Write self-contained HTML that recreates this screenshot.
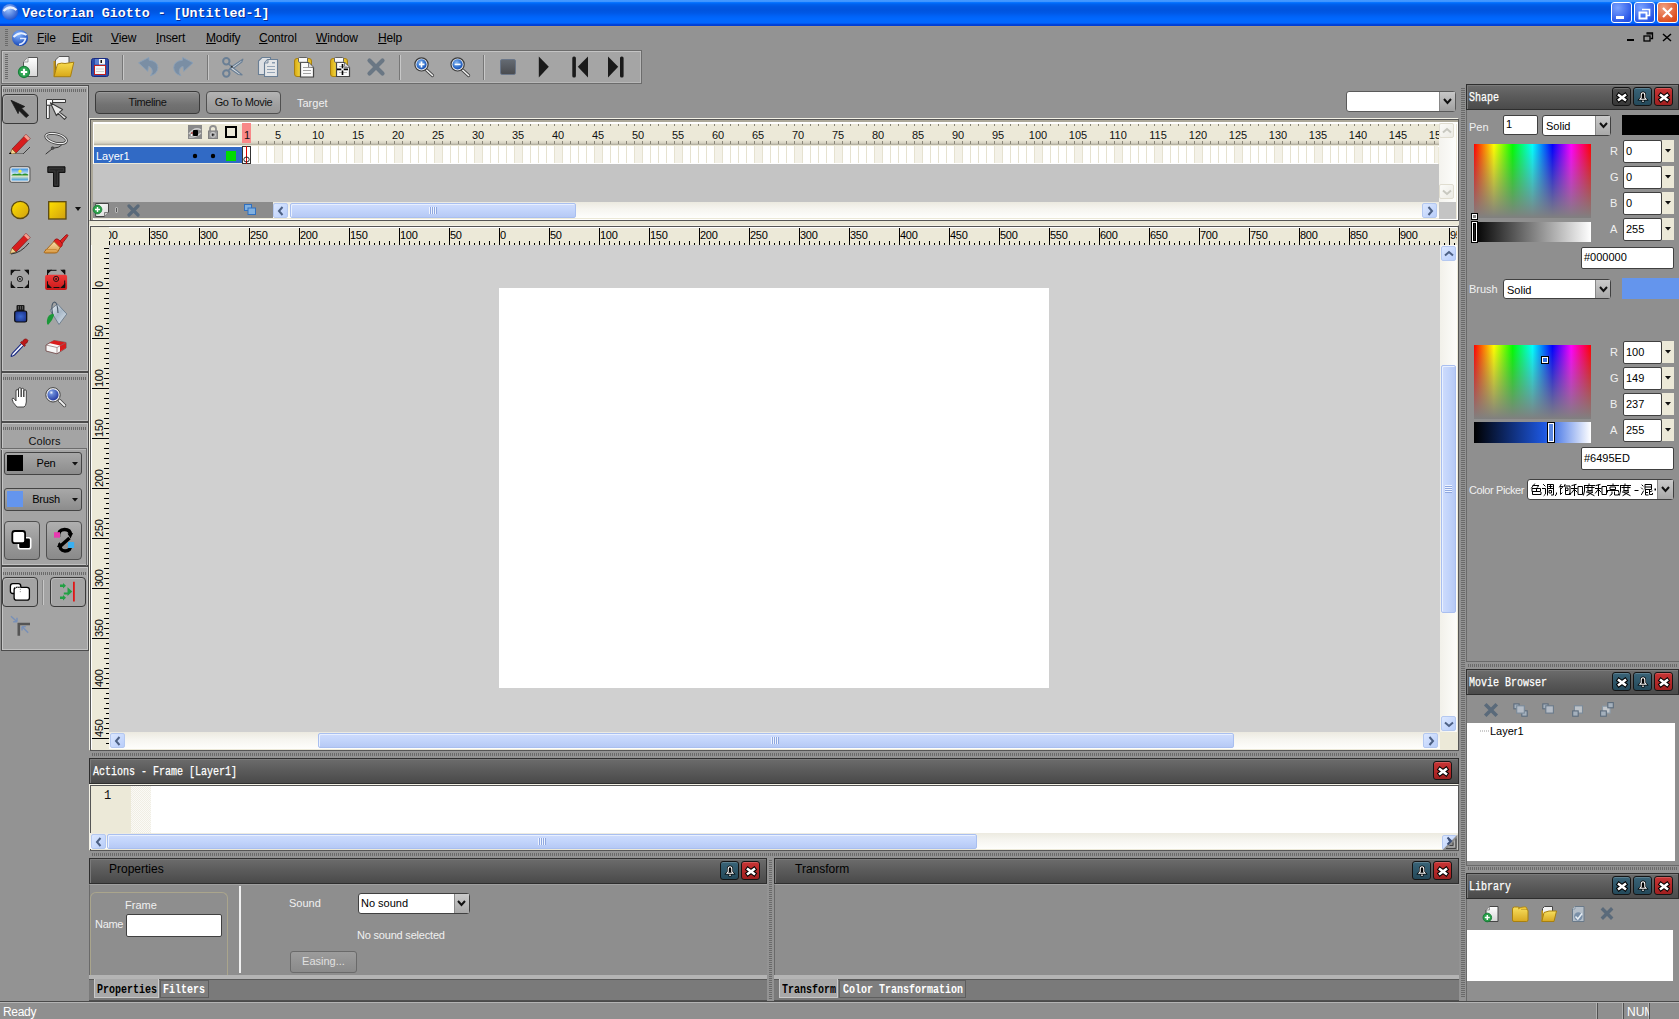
<!DOCTYPE html>
<html><head><meta charset="utf-8"><style>
*{margin:0;padding:0;box-sizing:border-box}
html,body{width:1679px;height:1019px;overflow:hidden;background:#939393;font-family:"Liberation Sans",sans-serif;font-size:11px;color:#000}
div,svg{position:absolute}
.grip{background:repeating-linear-gradient(90deg,#6a6a6a 0 1px,transparent 1px 2px)}
.gripv{background:repeating-linear-gradient(180deg,#6a6a6a 0 1px,transparent 1px 2px)}
.bm{font-family:"Liberation Mono",monospace;font-weight:bold;line-height:1}
</style></head>
<body>
<div style="position:absolute;left:0px;top:0px;width:1679px;height:26px;background:linear-gradient(#4499ff 0px,#3d93ff 1.8px,#0070ff 2.6px,#0060ec 4.5px,#0056e0 7px,#0054de 10px,#0058e6 13px,#0062f6 16px,#0068ff 19px,#0066ff 23px,#0042d8 24.5px,#003ccf 26px)"></div><div style="position:absolute;left:22px;top:7px;white-space:nowrap;line-height:1;font-family:'Liberation Mono',monospace;font-weight:bold;font-size:13.3px;color:#fff;text-shadow:1px 1px 0 #0a2a90">Vectorian Giotto - [Untitled-1]</div><svg style="position:absolute;left:0px;top:2px;" width="20" height="20" viewBox="0 0 20 20"><defs><radialGradient id="ai" cx="40%" cy="35%" r="70%"><stop offset="0" stop-color="#9cc4ff"/><stop offset="1" stop-color="#1d4fc8"/></radialGradient></defs><circle cx="10" cy="10" r="8" fill="url(#ai)"/><path d="M3.5 9 Q10 2.5 16.5 8" stroke="#e8f0ff" stroke-width="2.2" fill="none"/></svg><div style="left:1611px;top:2px;width:21px;height:21px;border:1px solid #fff;border-radius:3px;background:radial-gradient(circle at 30% 25%,#7aa2ff,#2553e6 80%)"><div style="left:4px;top:13px;width:8px;height:3px;background:#fff"></div></div><div style="left:1634px;top:2px;width:21px;height:21px;border:1px solid #fff;border-radius:3px;background:radial-gradient(circle at 30% 25%,#7aa2ff,#2553e6 80%)"><svg style="position:absolute;left:3px;top:5px;" width="14" height="12" viewBox="0 0 14 12"><rect x="1.5" y="4.5" width="7" height="6" fill="none" stroke="#fff" stroke-width="2"/><path d="M4 1.5 H11.5 V7.5 H9" fill="none" stroke="#fff" stroke-width="1.6"/></svg></div><div style="left:1657px;top:2px;width:21px;height:21px;border:1px solid #fff;border-radius:3px;background:radial-gradient(circle at 30% 25%,#f0a080,#dc4a1a 80%)"><svg style="position:absolute;left:3px;top:3px;" width="13" height="13" viewBox="0 0 13 13"><path d="M2 2 L11 11 M11 2 L2 11" stroke="#fff" stroke-width="2.2"/></svg></div><div style="position:absolute;left:0px;top:26px;width:1679px;height:25px;background:#939393;border-top:1px solid #a0968a"></div><div class="gripv" style="position:absolute;left:5px;top:29px;width:3px;height:17px;"></div><svg style="position:absolute;left:11px;top:29px;" width="18" height="18" viewBox="0 0 18 18"><defs><radialGradient id="mi" cx="40%" cy="30%" r="70%"><stop offset="0" stop-color="#8ab8ff"/><stop offset="1" stop-color="#1446b8"/></radialGradient></defs><circle cx="9" cy="9" r="8" fill="url(#mi)"/><path d="M2.5 8 Q9 1.5 15.5 6" stroke="#e8f0ff" stroke-width="2" fill="none"/><path d="M9 9.5 H14.5 Q13.5 15 8 15.5" stroke="#dfe8ff" stroke-width="1.6" fill="none"/></svg><div style="position:absolute;left:37px;top:32px;white-space:nowrap;line-height:1;font-size:12px;letter-spacing:-0.15px;color:#000"><span style="text-decoration:underline;text-underline-offset:1px">F</span>ile</div><div style="position:absolute;left:72px;top:32px;white-space:nowrap;line-height:1;font-size:12px;letter-spacing:-0.15px;color:#000"><span style="text-decoration:underline;text-underline-offset:1px">E</span>dit</div><div style="position:absolute;left:111px;top:32px;white-space:nowrap;line-height:1;font-size:12px;letter-spacing:-0.15px;color:#000"><span style="text-decoration:underline;text-underline-offset:1px">V</span>iew</div><div style="position:absolute;left:156px;top:32px;white-space:nowrap;line-height:1;font-size:12px;letter-spacing:-0.15px;color:#000"><span style="text-decoration:underline;text-underline-offset:1px">I</span>nsert</div><div style="position:absolute;left:206px;top:32px;white-space:nowrap;line-height:1;font-size:12px;letter-spacing:-0.15px;color:#000"><span style="text-decoration:underline;text-underline-offset:1px">M</span>odify</div><div style="position:absolute;left:259px;top:32px;white-space:nowrap;line-height:1;font-size:12px;letter-spacing:-0.15px;color:#000"><span style="text-decoration:underline;text-underline-offset:1px">C</span>ontrol</div><div style="position:absolute;left:316px;top:32px;white-space:nowrap;line-height:1;font-size:12px;letter-spacing:-0.15px;color:#000"><span style="text-decoration:underline;text-underline-offset:1px">W</span>indow</div><div style="position:absolute;left:378px;top:32px;white-space:nowrap;line-height:1;font-size:12px;letter-spacing:-0.15px;color:#000"><span style="text-decoration:underline;text-underline-offset:1px">H</span>elp</div><div style="position:absolute;left:1627px;top:39px;width:7px;height:2px;background:#000"></div><svg style="position:absolute;left:1643px;top:32px;" width="11" height="10" viewBox="0 0 11 10"><rect x="1" y="4" width="6" height="5" fill="none" stroke="#000" stroke-width="1.3"/><path d="M3.5 1 H9.5 V6.5 H7.5" fill="none" stroke="#000" stroke-width="1.3"/><path d="M3.5 2 H9.5" stroke="#000" stroke-width="1"/></svg><svg style="position:absolute;left:1662px;top:33px;" width="10" height="9" viewBox="0 0 10 9"><path d="M1 1 L9 8 M9 1 L1 8" stroke="#000" stroke-width="1.5"/></svg><div style="position:absolute;left:1px;top:50px;width:641px;height:34px;background:#a5a5a5;border:1px solid #6c6c6c;box-shadow:inset 1px 1px 0 #c4c4c4,inset -1px -1px 0 #b8b8b8"></div><div class="gripv" style="position:absolute;left:5px;top:54px;width:3px;height:26px;"></div><svg style="position:absolute;left:12px;top:52px;" width="105" height="30" viewBox="0 0 105 30"><defs><linearGradient id="ng" x1="0" y1="0" x2="0" y2="1"><stop offset="0" stop-color="#fff"/><stop offset="1" stop-color="#d8d8d8"/></linearGradient><linearGradient id="fg" x1="0" y1="0" x2="0" y2="1"><stop offset="0" stop-color="#f8dc50"/><stop offset="1" stop-color="#d8a818"/></linearGradient></defs><path d="M16 5.5 H25.5 V24.5 H11.5 V10 Z" fill="url(#ng)" stroke="#555" stroke-width="1"/><path d="M11.5 10 H16 V5.5" fill="#e8e8e8" stroke="#888" stroke-width="0.8"/><circle cx="12" cy="20" r="5.6" fill="#2ea452" stroke="#17803a" stroke-width="1.1"/><path d="M12 16.8 V23.2 M8.8 20 H15.2" stroke="#fff" stroke-width="2.2"/><path d="M47 4.5 H57 V18 H43.5 V8 Z" fill="#f4f4f4" stroke="#555" stroke-width="1"/><path d="M41.5 9 L43.5 9 L43.5 24.5 L41.5 24.5 Z" fill="#c09010"/><path d="M42 24.7 L45.5 12 Q50 10.5 53 11.5 L61.8 10.2 L58.5 24.7 Z" fill="url(#fg)" stroke="#a88010" stroke-width="1"/><rect x="79.5" y="6.5" width="17" height="18" rx="2" fill="#2c4ca8" stroke="#1a2a80" stroke-width="1"/><rect x="83" y="7" width="4" height="5.5" fill="#5a80d0"/><rect x="87" y="7" width="6" height="5.5" fill="#f4f4f4"/><rect x="88.5" y="8" width="1.5" height="3" fill="#111"/><rect x="82.5" y="13.5" width="11" height="9" fill="#f8f8f8" stroke="#c02020" stroke-width="1"/><path d="M84 17 H92 M84 19.5 H92" stroke="#c8c8c8" stroke-width="0.9"/></svg><div style="position:absolute;left:122px;top:55px;width:2px;height:25px;border-left:1px solid #777;border-right:1px solid #c8c8c8"></div><svg style="position:absolute;left:135px;top:52px;" width="65" height="28" viewBox="0 0 65 28"><path d="M3.5 10.8 L13.9 5.4 L14 8.2 Q22.5 9 22.8 15.5 Q22.8 21.5 15.5 23.8 Q18.5 20 16.8 17 Q15.5 14.5 13.5 14.3 L12.8 19.4 Z" fill="#7a8ea4" stroke="#8aa0b8" stroke-width="0.9" stroke-linejoin="round"/><path d="M58 10.8 L47.6 5.4 L47.5 8.2 Q39 9 38.7 15.5 Q38.7 21.5 46 23.8 Q43 20 44.7 17 Q46 14.5 48 14.3 L48.7 19.4 Z" fill="#7a8ea4" stroke="#8aa0b8" stroke-width="0.9" stroke-linejoin="round"/></svg><div style="position:absolute;left:207px;top:55px;width:2px;height:25px;border-left:1px solid #777;border-right:1px solid #c8c8c8"></div><svg style="position:absolute;left:218px;top:52px;" width="65" height="30" viewBox="0 0 65 30"><path d="M13.7 14.7 L24.8 7.2 L23.8 10 L15 16.5 Z" fill="#d8dde2" stroke="#6a7f95" stroke-width="1.2" stroke-linejoin="round"/><path d="M13.7 14.7 L24 22.8 L20.5 22.5 L12.5 17 Z" fill="#d8dde2" stroke="#6a7f95" stroke-width="1.2" stroke-linejoin="round"/><circle cx="8.3" cy="9.3" r="3.2" fill="none" stroke="#6a7f95" stroke-width="2"/><circle cx="8.3" cy="21.5" r="3.2" fill="none" stroke="#6a7f95" stroke-width="2"/><path d="M10.5 12 L13.7 14.7 L10.5 18.5" fill="none" stroke="#6a7f95" stroke-width="1.6"/><circle cx="13.8" cy="14.7" r="0.9" fill="#333"/><path d="M44 5.5 H52.5 V22.5 H40.5 V9 Z" fill="#dde0e4" stroke="#6a7f95" stroke-width="1.1"/><path d="M49.5 7.5 H59.5 V24.5 H46.5 V11 Z" fill="#e4e6e8" stroke="#6a7f95" stroke-width="1.1"/><path d="M46.5 11 H50 V7.5" fill="#c8d0d8" stroke="#6a7f95" stroke-width="0.8"/><path d="M49 14.5 H57 M49 17.5 H57 M49 20.5 H57" stroke="#8a9cb0" stroke-width="0.9"/><rect x="54" y="10" width="3" height="1.5" fill="#8a9cb0"/></svg><svg style="position:absolute;left:290px;top:52px;" width="65" height="30" viewBox="0 0 65 30"><defs><linearGradient id="cg" x1="0" y1="0" x2="1" y2="0"><stop offset="0" stop-color="#d8a810"/><stop offset="0.4" stop-color="#f8e048"/><stop offset="1" stop-color="#e0b820"/></linearGradient></defs><rect x="4.5" y="6.5" width="17" height="18" rx="2.5" fill="url(#cg)" stroke="#a88010" stroke-width="1"/><path d="M10.5 10.5 H18.5 L23.5 15.5 V25 H10.5 Z" fill="#fafafa" stroke="#444" stroke-width="1.2"/><path d="M18.5 10.5 V15.5 H23.5" fill="#ddd" stroke="#666" stroke-width="0.8"/><rect x="8.5" y="5.5" width="9" height="4.8" rx="1" fill="#f8f8f8" stroke="#555" stroke-width="0.9"/><path d="M13 15.5 H21 M13 18.5 H21 M13 21.5 H21" stroke="#999" stroke-width="0.9"/><rect x="40.5" y="6.5" width="17" height="18" rx="2.5" fill="url(#cg)" stroke="#a88010" stroke-width="1"/><path d="M46.5 10.5 H54.5 L59.5 15.5 V24.5 H46.5 Z" fill="#fafafa" stroke="#444" stroke-width="1.2"/><path d="M54.5 10.5 V15.5 H59.5" fill="#ddd" stroke="#666" stroke-width="0.8"/><rect x="44.5" y="5.5" width="9" height="4.8" rx="1" fill="#f8f8f8" stroke="#555" stroke-width="0.9"/><path d="M49 14.5 H57 M49 20.5 H57" stroke="#aaa" stroke-width="0.9"/><path d="M52.5 12 V16.3 M52.5 18.5 V23 M47 17.4 H51.3 M53.7 17.4 H58" stroke="#000" stroke-width="1.6"/></svg><svg style="position:absolute;left:366px;top:57px;" width="20" height="20" viewBox="0 0 20 20"><path d="M3.5 3.5 L16.5 16.5 M16.5 3.5 L3.5 16.5" stroke="#6a7784" stroke-width="4.2" stroke-linecap="round"/></svg><div style="position:absolute;left:399px;top:55px;width:2px;height:25px;border-left:1px solid #777;border-right:1px solid #c8c8c8"></div><svg style="position:absolute;left:0px;top:0px;" width="500" height="84" viewBox="0 0 500 84"><defs><radialGradient id="zb" cx="40%" cy="35%" r="65%"><stop offset="0" stop-color="#8ab8f0"/><stop offset="0.6" stop-color="#3a78d0"/><stop offset="1" stop-color="#1a50b0"/></radialGradient></defs><path d="M426.5 70 L432.5 75.5" stroke="#444" stroke-width="3.2" stroke-linecap="round"/><path d="M426.5 70 L432.5 75.5" stroke="#f0f0f0" stroke-width="1.6" stroke-linecap="round"/><circle cx="421.5" cy="64.4" r="6.6" fill="#eee" stroke="#3a3a3a" stroke-width="1.2"/><circle cx="421.5" cy="64.4" r="5.1" fill="url(#zb)"/><path d="M419.0 64.4 H424.5 M421.5 61.5 V67.5" stroke="#fff" stroke-width="1.6"/><path d="M462.6 70 L468.6 75.5" stroke="#444" stroke-width="3.2" stroke-linecap="round"/><path d="M462.6 70 L468.6 75.5" stroke="#f0f0f0" stroke-width="1.6" stroke-linecap="round"/><circle cx="457.6" cy="64.4" r="6.6" fill="#eee" stroke="#3a3a3a" stroke-width="1.2"/><circle cx="457.6" cy="64.4" r="5.1" fill="url(#zb)"/><path d="M454.6 64.4 H460.6" stroke="#fff" stroke-width="1.6"/></svg><div style="position:absolute;left:483px;top:55px;width:2px;height:25px;border-left:1px solid #777;border-right:1px solid #c8c8c8"></div><div style="position:absolute;left:500px;top:59px;width:16px;height:16px;background:linear-gradient(#646a72,#4a4c50);border:1px solid #6a7688;border-radius:2px"></div><svg style="position:absolute;left:538px;top:56px;" width="12" height="22" viewBox="0 0 12 22"><path d="M0.8 0.5 L10.8 10.8 L0.8 21.5 Z" fill="#1a1a1a"/></svg><svg style="position:absolute;left:572px;top:56px;" width="17" height="22" viewBox="0 0 17 22"><rect x="0.3" y="0.5" width="3.6" height="21" rx="1.6" fill="#1a1a1a"/><path d="M16 0.5 L5.8 10.8 L16 21.5 Z" fill="#1a1a1a"/></svg><svg style="position:absolute;left:607px;top:56px;" width="17" height="22" viewBox="0 0 17 22"><path d="M1 0.5 L11.2 10.8 L1 21.5 Z" fill="#1a1a1a"/><rect x="13" y="0.5" width="3.6" height="21" rx="1.6" fill="#1a1a1a"/></svg><div style="position:absolute;left:0px;top:84px;width:89px;height:567px;background:#939393"></div><div style="position:absolute;left:1px;top:85px;width:88px;height:287px;background:#a4a4a4;border:1px solid #4c4c4c;box-shadow:inset 1px 1px 0 #c6c6c6,inset -1px -1px 0 #c0c0c0"></div><div class="grip" style="position:absolute;left:3px;top:89px;width:83px;height:3px;"></div><div style="position:absolute;left:1px;top:372px;width:88px;height:50px;background:#a4a4a4;border:1px solid #4c4c4c;box-shadow:inset 1px 1px 0 #c6c6c6,inset -1px -1px 0 #c0c0c0"></div><div class="grip" style="position:absolute;left:3px;top:377px;width:83px;height:3px;"></div><div style="position:absolute;left:1px;top:422px;width:88px;height:144px;background:#a4a4a4;border:1px solid #4c4c4c;box-shadow:inset 1px 1px 0 #c6c6c6,inset -1px -1px 0 #c0c0c0"></div><div class="grip" style="position:absolute;left:3px;top:427px;width:83px;height:3px;"></div><div style="position:absolute;left:1px;top:566px;width:88px;height:85px;background:#a4a4a4;border:1px solid #4c4c4c;box-shadow:inset 1px 1px 0 #c6c6c6,inset -1px -1px 0 #c0c0c0"></div><div class="grip" style="position:absolute;left:3px;top:572px;width:83px;height:3px;"></div><div style="position:absolute;left:2px;top:94px;width:36px;height:30px;background:#9c9c9c;border:1px solid #3a3a3a;border-radius:4px;box-shadow:inset 1px 1px 0 #b0b0b0"></div><svg style="position:absolute;left:10px;top:99px;" width="20" height="20" viewBox="0 0 20 20"><path d="M1 1.3 L14.7 7.5 L11.6 9.3 L18.7 16.3 L16 18.5 L9 11.5 L8.1 14.6 Z" fill="#1a1a1a" stroke="#1a1a1a" stroke-width="0.8" stroke-linejoin="round"/></svg><svg style="position:absolute;left:40px;top:92px;" width="32" height="32" viewBox="0 0 32 32"><path d="M12.6 7.5 H25.5 V10.5 H12.6 Z" fill="#f4f4f4" stroke="#3a3a3a" stroke-width="1"/><path d="M6.5 13 H9.3 V26.5 H6.5 Z" fill="#f8f8f8" stroke="#3a3a3a" stroke-width="1"/><path d="M6.5 7.5 H12.5 V13.2 H6.5 Z" fill="#fafafa" stroke="#3a3a3a" stroke-width="1"/><path d="M10.4 10.7 L22.6 17.6 L19.5 20.1 L26.4 25.4 L24.5 27.3 L18.2 21.4 L16.3 23.6 Z" fill="#ececec" stroke="#3a3a3a" stroke-width="1.1" stroke-linejoin="round"/></svg><svg style="position:absolute;left:9px;top:132px;" width="23" height="22" viewBox="0 0 23 22"><path d="M3 17 L17 2.5 L21 6.5 L7 21 Z" fill="#d81c1c" stroke="#802020" stroke-width="0.8"/><path d="M17 2.5 L21 6.5 L19 8.5 L15 4.5Z" fill="#f0a090"/><path d="M3 17 L7 21 L1 22.5 Z" fill="#f0d090" stroke="#805010" stroke-width="0.6"/><path d="M0.5 22 L2 21" stroke="#000" stroke-width="2"/><path d="M6 22 H14 L21 15" stroke="#333" stroke-width="0.9" fill="none"/></svg><svg style="position:absolute;left:40px;top:128px;" width="32" height="32" viewBox="0 0 32 32"><ellipse cx="16.1" cy="10.5" rx="10.6" ry="4.6" transform="rotate(14 16.1 10.5)" fill="none" stroke="#333" stroke-width="2.6"/><ellipse cx="16.1" cy="10.5" rx="10.6" ry="4.6" transform="rotate(14 16.1 10.5)" fill="none" stroke="#f0f0f0" stroke-width="1.2"/><path d="M21.7 17 Q19 20 13 20.2 L5.7 26.1" fill="none" stroke="#333" stroke-width="1"/><circle cx="12.6" cy="20.1" r="1.4" fill="#555" stroke="#333" stroke-width="0.6"/></svg><svg style="position:absolute;left:9px;top:166px;" width="22" height="18" viewBox="0 0 22 18"><defs><linearGradient id="sky" x1="0" y1="0" x2="0" y2="1"><stop offset="0" stop-color="#3a90e0"/><stop offset="0.45" stop-color="#c8e4f8"/><stop offset="0.6" stop-color="#f0f0c0"/><stop offset="1" stop-color="#3a98e0"/></linearGradient></defs><rect x="0.7" y="0.7" width="20.3" height="15.6" rx="2.5" fill="#eee" stroke="#666" stroke-width="1.2"/><rect x="2.5" y="2.5" width="16.7" height="12" fill="url(#sky)"/><circle cx="11" cy="5.2" r="1.6" fill="#f8f040"/><path d="M2.5 9 Q5 7 8 8 Q11 7 13 8.5 Q16 6.5 19.2 8.5 V9.5 H2.5 Z" fill="#2a9030"/></svg><svg style="position:absolute;left:47px;top:166px;" width="19" height="21" viewBox="0 0 19 21"><path d="M0.8 0.8 H18 V6.5 H12 V20.5 H6.5 V6.5 H0.8 Z" fill="#262626" stroke="#111" stroke-width="1"/><path d="M2.2 2.2 H16.6 V5 H10.6 V19 H8 V5 H2.2 Z" fill="none" stroke="#3c3c3c" stroke-width="0.8"/></svg><svg style="position:absolute;left:10px;top:200px;" width="21" height="20" viewBox="0 0 21 20"><defs><linearGradient id="yg" x1="0" y1="0" x2="1" y2="1"><stop offset="0" stop-color="#ffe000"/><stop offset="1" stop-color="#d0a010"/></linearGradient></defs><ellipse cx="10.2" cy="9.9" rx="8.8" ry="8.6" fill="url(#yg)" stroke="#5a4810" stroke-width="1.3"/></svg><svg style="position:absolute;left:48px;top:201px;" width="19" height="19" viewBox="0 0 19 19"><rect x="0.7" y="0.7" width="17.3" height="17.3" fill="url(#yg)" stroke="#5a4810" stroke-width="1.3"/></svg><svg style="position:absolute;left:75px;top:207px;" width="6" height="5" viewBox="0 0 6 5"><path d="M0 0 H6 L3 4 Z" fill="#111"/></svg><svg style="position:absolute;left:9px;top:232px;" width="23" height="23" viewBox="0 0 23 23"><path d="M3 16 L17 1.5 L21 5.5 L7 20 Z" fill="#d81c1c" stroke="#802020" stroke-width="0.8"/><path d="M17 1.5 L21 5.5 L19 7.5 L15 3.5Z" fill="#f0a090"/><path d="M3 16 L7 20 L1 21.5 Z" fill="#f0d090" stroke="#805010" stroke-width="0.6"/><path d="M2 22 Q12 21 20 11" stroke="#333" stroke-width="1" fill="none"/></svg><svg style="position:absolute;left:43px;top:232px;" width="26" height="22" viewBox="0 0 26 22"><defs><linearGradient id="bg2" x1="0" y1="0" x2="0" y2="1"><stop offset="0" stop-color="#f8e0b0"/><stop offset="1" stop-color="#d89840"/></linearGradient></defs><path d="M16 10 L23 3 Q24.5 2 25 3.5 L24.5 4.5 L18.5 12.5 Z" fill="#e02020" stroke="#901010" stroke-width="0.8"/><path d="M12 7.5 Q14 6 16 8 L19 11 Q20 13 18.5 14.5 L16.5 16 L10.5 10 Z" fill="#e02020" stroke="#901010" stroke-width="0.8"/><path d="M11 9.5 L17 15.5 L15 19.5 Q14 21 12 21 H1.8 Q0.8 20.5 1.5 19.5 Z" fill="url(#bg2)" stroke="#a06010" stroke-width="0.9"/><path d="M2 17.5 H13 L15.5 19.5" fill="none" stroke="#c08030" stroke-width="0.7"/></svg><svg style="position:absolute;left:0px;top:260px;" width="90" height="40" viewBox="0 0 90 40"><defs><linearGradient id="rg" x1="0" y1="0" x2="0" y2="1"><stop offset="0" stop-color="#f03a3a"/><stop offset="1" stop-color="#c81818"/></linearGradient></defs><g transform="translate(10.8,9.8)"><path d="M0 0 H5 L0 5 Z M18.2 0 H13.2 L18.2 5 Z M0 18.2 V13.2 L5 18.2 Z M18.2 18.2 V13.2 L13.2 18.2 Z" fill="#111"/><path d="M0.5 0.5 H17.7 V17.7 H0.5 Z" fill="none" stroke="#111" stroke-width="1" stroke-dasharray="6 6.2" stroke-dashoffset="-3"/><circle cx="9.1" cy="9.1" r="2.6" fill="none" stroke="#111" stroke-width="0.9"/><circle cx="9.1" cy="9.1" r="0.9" fill="#111"/></g><rect x="45.1" y="14.7" width="22" height="15.3" rx="2" fill="url(#rg)"/><g transform="translate(47,9.8)"><path d="M0 0 H5 L0 5 Z M18.2 0 H13.2 L18.2 5 Z M0 18.2 V13.2 L5 18.2 Z M18.2 18.2 V13.2 L13.2 18.2 Z" fill="#111"/><path d="M0.5 0.5 H17.7 V17.7 H0.5 Z" fill="none" stroke="#111" stroke-width="1" stroke-dasharray="6 6.2" stroke-dashoffset="-3"/><circle cx="9.1" cy="9.1" r="2.6" fill="none" stroke="#111" stroke-width="0.9"/><circle cx="9.1" cy="9.1" r="0.9" fill="#111"/></g></svg><svg style="position:absolute;left:14px;top:304px;" width="14" height="19" viewBox="0 0 14 19"><defs><radialGradient id="ink" cx="50%" cy="50%" r="60%"><stop offset="0" stop-color="#3a68d0"/><stop offset="1" stop-color="#1a3088"/></radialGradient></defs><rect x="2.5" y="1" width="8" height="6.5" rx="1" fill="#1a1a1a"/><path d="M4.5 2 V5.5 M6.5 2 V5.5 M8.5 2 V5.5" stroke="#666" stroke-width="0.8"/><rect x="0.7" y="7" width="12" height="11" rx="1.8" fill="url(#ink)" stroke="#0a0a0a" stroke-width="1.2"/></svg><svg style="position:absolute;left:45px;top:301px;" width="23" height="25" viewBox="0 0 23 25"><defs><linearGradient id="bk" x1="0" y1="0" x2="1" y2="1"><stop offset="0" stop-color="#f0f4f8"/><stop offset="0.5" stop-color="#a8b8c8"/><stop offset="1" stop-color="#e0e8f0"/></linearGradient></defs><path d="M5 9 L12.5 3 L21.8 13 L14 23.5 Z" fill="url(#bk)" stroke="#6a7a8a" stroke-width="0.9"/><path d="M7.5 13 Q5.5 2 9.5 1 Q12.5 1 13 12" fill="none" stroke="#4a5a6a" stroke-width="1.2"/><path d="M8.5 12.8 Q3 13 2 19 Q1.5 24.5 3.5 23.5 Q7.5 19.5 9 14.5 Z" fill="#1a9838"/></svg><svg style="position:absolute;left:10px;top:338px;" width="19" height="19" viewBox="0 0 19 19"><path d="M12.2 4.8 L2.5 15 Q1 17.5 1.2 18.3 Q2 18.6 4.5 17 L14.2 6.8 Z" fill="#f4f6ff" stroke="#1a2a80" stroke-width="1.1"/><path d="M10.5 4.5 L14.5 8.5 L15.5 7 L14.5 6 Q17.5 5.5 18 2.5 Q17 0.5 15 1 Q13 1.5 12.5 4 L11.5 3.5 Z" fill="#c01818" stroke="#801010" stroke-width="0.7"/></svg><svg style="position:absolute;left:45px;top:339px;" width="22" height="16" viewBox="0 0 22 16"><path d="M1 6 L9 1.5 L21 3.5 L21 9 L12 14.8 L1 12 Z" fill="#f8f8f8" stroke="#6a4040" stroke-width="0.8"/><path d="M9 1.5 L21 3.5 L21 9 L15 12.5 L15 6.5 L4 4 Z" fill="#d81c1c"/><path d="M1 6 L12 8.5 L12 14.8 M12 8.5 L21 3.5" fill="none" stroke="#8a6a6a" stroke-width="0.7"/></svg><svg style="position:absolute;left:11px;top:387px;" width="19" height="21" viewBox="0 0 19 21"><path d="M6 20 Q1 15 1 12 Q1.5 10.5 3 11.5 L5 14 V4 Q5 2.5 6.3 2.5 Q7.5 2.5 7.5 4 V10 V2 Q7.5 0.7 8.8 0.7 Q10.2 0.7 10.2 2 V10 V2.5 Q10.2 1.3 11.5 1.3 Q12.8 1.3 12.8 2.5 V10 V4 Q12.8 2.8 14 2.8 Q15.3 2.8 15.3 4 V15 Q15 19 13 20 Z" fill="#fff" stroke="#333" stroke-width="0.9"/></svg><svg style="position:absolute;left:40px;top:380px;" width="30" height="30" viewBox="0 0 30 30"><defs><radialGradient id="zz" cx="35%" cy="30%" r="75%"><stop offset="0" stop-color="#f0f4ff"/><stop offset="0.25" stop-color="#6a8ad8"/><stop offset="1" stop-color="#2238a0"/></radialGradient></defs><path d="M19.5 20.5 L24.5 25.5" stroke="#444" stroke-width="3.4" stroke-linecap="round"/><path d="M19.5 20.5 L24.5 25.5" stroke="#f0f0f0" stroke-width="1.8" stroke-linecap="round"/><circle cx="13" cy="14.8" r="7.2" fill="#eee" stroke="#444" stroke-width="1"/><circle cx="13" cy="14.8" r="5.6" fill="url(#zz)"/></svg><div style="position:absolute;left:0px;top:436px;white-space:nowrap;line-height:1;width:89px;text-align:center;font-size:11px;color:#111">Colors</div><div style="position:absolute;left:1px;top:448px;width:86px;height:118px;border-top:1px solid #6c6c6c;border-right:1px solid #6c6c6c;box-shadow:inset 0 1px 0 #b8b8b8"></div><div style="position:absolute;left:4px;top:452px;width:78px;height:23px;background:linear-gradient(#a8a8a8,#8c8c8c);border:1px solid #444;border-radius:3px"></div><div style="position:absolute;left:7px;top:455px;width:16px;height:16px;background:#000"></div><div style="position:absolute;left:24px;top:458px;white-space:nowrap;line-height:1;width:44px;text-align:center;font-size:11px;letter-spacing:-0.2px;color:#000">Pen</div><svg style="position:absolute;left:72px;top:462px;" width="6" height="4" viewBox="0 0 6 4"><path d="M0 0 H6 L3 3.5 Z" fill="#111"/></svg><div style="position:absolute;left:4px;top:488px;width:78px;height:23px;background:linear-gradient(#a8a8a8,#8c8c8c);border:1px solid #444;border-radius:3px"></div><div style="position:absolute;left:7px;top:491px;width:16px;height:16px;background:#6495ed"></div><div style="position:absolute;left:24px;top:494px;white-space:nowrap;line-height:1;width:44px;text-align:center;font-size:11px;letter-spacing:-0.2px;color:#000">Brush</div><svg style="position:absolute;left:72px;top:498px;" width="6" height="4" viewBox="0 0 6 4"><path d="M0 0 H6 L3 3.5 Z" fill="#111"/></svg><div style="position:absolute;left:4px;top:521px;width:36px;height:39px;background:linear-gradient(#b0b0b0,#9a9a9a 50%,#8a8a8a);border:1px solid #505050;border-radius:4px"></div><div style="position:absolute;left:46px;top:521px;width:36px;height:39px;background:linear-gradient(#b0b0b0,#9a9a9a 50%,#8a8a8a);border:1px solid #505050;border-radius:4px"></div><div style="position:absolute;left:2px;top:577px;width:36px;height:30px;background:#a4a4a4;border:1px solid #3a3a3a;border-radius:4px;box-shadow:inset 1px 1px 0 #b8b8b8"></div><div style="position:absolute;left:42px;top:580px;width:2px;height:25px;border-left:1px solid #8a8a8a;border-right:1px solid #c8c8c8"></div><div style="position:absolute;left:50px;top:577px;width:36px;height:30px;background:#a4a4a4;border:1px solid #3a3a3a;border-radius:4px;box-shadow:inset 1px 1px 0 #b8b8b8"></div><svg style="position:absolute;left:0px;top:515px;" width="90" height="130" viewBox="0 0 90 130"><rect x="18.4" y="22.7" width="12.3" height="11" rx="2" fill="#000" stroke="#fff" stroke-width="1.6"/><rect x="12.3" y="16" width="12.8" height="12.2" rx="2.5" fill="#fff" stroke="#000" stroke-width="1.8"/><path d="M58.5 22 Q58 14.5 64.5 14.5 Q70.5 14.5 70.5 20" fill="none" stroke="#000" stroke-width="3.4"/><path d="M67.5 18.5 L73 18 L70.5 23.5 Z" fill="#000"/><path d="M69.5 23 L60.5 31" fill="none" stroke="#000" stroke-width="3.4"/><path d="M60 28.5 Q59 35.5 65 36 Q71 36 70.5 30" fill="none" stroke="#000" stroke-width="3.4"/><path d="M57 32 L62 32 L59.5 27 Z" fill="#000"/><rect x="54" y="17.2" width="6" height="5.5" fill="#e83ab0"/><rect x="68" y="27" width="6.2" height="6" fill="#3ab0f0"/><rect x="10.4" y="68.7" width="10.4" height="9.8" rx="2.5" fill="#fff" stroke="#000" stroke-width="1.3"/><rect x="14.1" y="72.3" width="15.3" height="12.9" rx="2.5" fill="#fff" stroke="#000" stroke-width="1.3"/><path d="M15 72.5 H20.3 V78" fill="none" stroke="#999" stroke-width="1" stroke-dasharray="1.2 1"/><path d="M73.9 66.8 V86.4" stroke="#e01818" stroke-width="1.8"/><path d="M60 69.5 H63 V68 L66 70.8 L63 73.6 V72 H60 Z" fill="#22a044"/><path d="M63.8 77.5 H67.5 V72.3 L72.3 76.6 L67.5 81 V79.5 H63.8 Z" fill="#22a044"/><path d="M60 81.5 H63 V80 L66 82.8 L63 85.6 V84 H60 Z" fill="#22a044"/><path d="M18.8 120.8 V109 H30" fill="none" stroke="#555" stroke-width="2.6"/><path d="M11 101.2 L17 106.7 M17 106.7 V102.8 M17 106.7 H13.2" fill="none" stroke="#7890b8" stroke-width="1.4"/><path d="M28.2 117.7 L22 111.6 M22 111.6 V115.4 M22 111.6 H25.8" fill="none" stroke="#7890b8" stroke-width="1.4"/></svg><div style="position:absolute;left:89px;top:84px;width:1370px;height:34px;background:#939393"></div><div style="position:absolute;left:95px;top:91px;width:105px;height:23px;background:linear-gradient(#8e8e8e,#727272 60%,#6a6a6a);border:1px solid #3a3a3a;border-radius:4px;box-shadow:inset 0 1px 0 #9a9a9a"></div><div style="position:absolute;left:95px;top:97px;white-space:nowrap;line-height:1;width:105px;text-align:center;font-size:11px;letter-spacing:-0.4px;color:#111">Timeline</div><div style="position:absolute;left:206px;top:91px;width:75px;height:23px;background:linear-gradient(#b4b4b4,#a0a0a0 60%,#989898);border:1px solid #505050;border-radius:4px"></div><div style="position:absolute;left:206px;top:97px;white-space:nowrap;line-height:1;width:75px;text-align:center;font-size:11px;letter-spacing:-0.35px;color:#111">Go To Movie</div><div style="position:absolute;left:297px;top:98px;white-space:nowrap;line-height:1;font-size:11px;color:#f0f0f0">Target</div><div style="position:absolute;left:1346px;top:91px;width:110px;height:21px;background:#fff;border:1px solid #5a5a5a;border-radius:3px"></div><div style="position:absolute;left:1439px;top:92px;width:16px;height:19px;background:linear-gradient(#c8c8c8,#a0a0a0);border-left:1px solid #888"></div><svg style="position:absolute;left:1443px;top:98px;" width="9" height="7" viewBox="0 0 9 7"><path d="M1 1 L4.5 5 L8 1" fill="none" stroke="#111" stroke-width="2"/></svg><div style="position:absolute;left:89px;top:118px;width:1370px;height:103px;border-top:1px solid #f4f2e6;border-left:1px solid #f4f2e6;border-right:1px solid #555;border-bottom:1px solid #555;box-shadow:inset 1px 1px 0 #555,inset 3px 3px 0 #aca899,inset 4px 5px 0 #fff,inset -1px -1px 0 #fff;background:#ece9d8"></div><div style="position:absolute;left:94px;top:124px;width:1345px;height:21px;background:linear-gradient(#ece9d8 0,#ece9d8 75%,#d8d4c4 90%,#aca899 100%)"></div><svg style="position:absolute;left:188px;top:125px;" width="14" height="14" viewBox="0 0 14 14"><rect x="0" y="0" width="14" height="14" fill="#8a8a8a"/><path d="M1 9 Q7 1 13 5" stroke="#cfcfcf" stroke-width="1.5" fill="none"/><path d="M1 12 Q7 13 13 8" stroke="#cfcfcf" stroke-width="1.2" fill="none"/><rect x="5" y="5" width="5" height="6" rx="1" fill="#000"/><circle cx="3.5" cy="10" r="1" fill="#fff"/><circle cx="4" cy="8" r="0.8" fill="#d02020"/></svg><svg style="position:absolute;left:208px;top:125px;" width="10" height="14" viewBox="0 0 10 14"><path d="M2 6 V3.5 Q2 1 5 1 Q8 1 8 3.5 V6" fill="none" stroke="#909090" stroke-width="1.8"/><rect x="0.5" y="6" width="9" height="7.5" fill="#9a9a9a" stroke="#808080"/><circle cx="5" cy="9.8" r="2.5" fill="none" stroke="#ccc"/><path d="M4 8.5 L6.5 9.8 L4 11.2 Z" fill="#222"/></svg><div style="position:absolute;left:225px;top:126px;width:12px;height:12px;border:2px solid #000"></div><div style="position:absolute;left:242px;top:123px;width:9px;height:20px;background:#f88888"></div><div style="position:absolute;left:244px;top:130px;white-space:nowrap;line-height:1;font-size:11px;color:#111">1</div><svg style="position:absolute;left:93px;top:123px;" width="1346" height="22" viewBox="0 0 1346 22"><rect x="165" y="1" width="1" height="2" fill="#8a8678"/><rect x="165" y="18" width="1" height="3" fill="#8a8678"/><rect x="173" y="1" width="1" height="2" fill="#8a8678"/><rect x="173" y="18" width="1" height="3" fill="#8a8678"/><rect x="181" y="1" width="1" height="2" fill="#8a8678"/><rect x="181" y="18" width="1" height="3" fill="#8a8678"/><rect x="189" y="1" width="1" height="2" fill="#8a8678"/><rect x="189" y="18" width="1" height="3" fill="#8a8678"/><rect x="197" y="1" width="1" height="2" fill="#8a8678"/><rect x="197" y="18" width="1" height="3" fill="#8a8678"/><rect x="205" y="1" width="1" height="2" fill="#8a8678"/><rect x="205" y="18" width="1" height="3" fill="#8a8678"/><rect x="213" y="1" width="1" height="2" fill="#8a8678"/><rect x="213" y="18" width="1" height="3" fill="#8a8678"/><rect x="221" y="1" width="1" height="2" fill="#8a8678"/><rect x="221" y="18" width="1" height="3" fill="#8a8678"/><rect x="229" y="1" width="1" height="2" fill="#8a8678"/><rect x="229" y="18" width="1" height="3" fill="#8a8678"/><rect x="237" y="1" width="1" height="2" fill="#8a8678"/><rect x="237" y="18" width="1" height="3" fill="#8a8678"/><rect x="245" y="1" width="1" height="2" fill="#8a8678"/><rect x="245" y="18" width="1" height="3" fill="#8a8678"/><rect x="253" y="1" width="1" height="2" fill="#8a8678"/><rect x="253" y="18" width="1" height="3" fill="#8a8678"/><rect x="261" y="1" width="1" height="2" fill="#8a8678"/><rect x="261" y="18" width="1" height="3" fill="#8a8678"/><rect x="269" y="1" width="1" height="2" fill="#8a8678"/><rect x="269" y="18" width="1" height="3" fill="#8a8678"/><rect x="277" y="1" width="1" height="2" fill="#8a8678"/><rect x="277" y="18" width="1" height="3" fill="#8a8678"/><rect x="285" y="1" width="1" height="2" fill="#8a8678"/><rect x="285" y="18" width="1" height="3" fill="#8a8678"/><rect x="293" y="1" width="1" height="2" fill="#8a8678"/><rect x="293" y="18" width="1" height="3" fill="#8a8678"/><rect x="301" y="1" width="1" height="2" fill="#8a8678"/><rect x="301" y="18" width="1" height="3" fill="#8a8678"/><rect x="309" y="1" width="1" height="2" fill="#8a8678"/><rect x="309" y="18" width="1" height="3" fill="#8a8678"/><rect x="317" y="1" width="1" height="2" fill="#8a8678"/><rect x="317" y="18" width="1" height="3" fill="#8a8678"/><rect x="325" y="1" width="1" height="2" fill="#8a8678"/><rect x="325" y="18" width="1" height="3" fill="#8a8678"/><rect x="333" y="1" width="1" height="2" fill="#8a8678"/><rect x="333" y="18" width="1" height="3" fill="#8a8678"/><rect x="341" y="1" width="1" height="2" fill="#8a8678"/><rect x="341" y="18" width="1" height="3" fill="#8a8678"/><rect x="349" y="1" width="1" height="2" fill="#8a8678"/><rect x="349" y="18" width="1" height="3" fill="#8a8678"/><rect x="357" y="1" width="1" height="2" fill="#8a8678"/><rect x="357" y="18" width="1" height="3" fill="#8a8678"/><rect x="365" y="1" width="1" height="2" fill="#8a8678"/><rect x="365" y="18" width="1" height="3" fill="#8a8678"/><rect x="373" y="1" width="1" height="2" fill="#8a8678"/><rect x="373" y="18" width="1" height="3" fill="#8a8678"/><rect x="381" y="1" width="1" height="2" fill="#8a8678"/><rect x="381" y="18" width="1" height="3" fill="#8a8678"/><rect x="389" y="1" width="1" height="2" fill="#8a8678"/><rect x="389" y="18" width="1" height="3" fill="#8a8678"/><rect x="397" y="1" width="1" height="2" fill="#8a8678"/><rect x="397" y="18" width="1" height="3" fill="#8a8678"/><rect x="405" y="1" width="1" height="2" fill="#8a8678"/><rect x="405" y="18" width="1" height="3" fill="#8a8678"/><rect x="413" y="1" width="1" height="2" fill="#8a8678"/><rect x="413" y="18" width="1" height="3" fill="#8a8678"/><rect x="421" y="1" width="1" height="2" fill="#8a8678"/><rect x="421" y="18" width="1" height="3" fill="#8a8678"/><rect x="429" y="1" width="1" height="2" fill="#8a8678"/><rect x="429" y="18" width="1" height="3" fill="#8a8678"/><rect x="437" y="1" width="1" height="2" fill="#8a8678"/><rect x="437" y="18" width="1" height="3" fill="#8a8678"/><rect x="445" y="1" width="1" height="2" fill="#8a8678"/><rect x="445" y="18" width="1" height="3" fill="#8a8678"/><rect x="453" y="1" width="1" height="2" fill="#8a8678"/><rect x="453" y="18" width="1" height="3" fill="#8a8678"/><rect x="461" y="1" width="1" height="2" fill="#8a8678"/><rect x="461" y="18" width="1" height="3" fill="#8a8678"/><rect x="469" y="1" width="1" height="2" fill="#8a8678"/><rect x="469" y="18" width="1" height="3" fill="#8a8678"/><rect x="477" y="1" width="1" height="2" fill="#8a8678"/><rect x="477" y="18" width="1" height="3" fill="#8a8678"/><rect x="485" y="1" width="1" height="2" fill="#8a8678"/><rect x="485" y="18" width="1" height="3" fill="#8a8678"/><rect x="493" y="1" width="1" height="2" fill="#8a8678"/><rect x="493" y="18" width="1" height="3" fill="#8a8678"/><rect x="501" y="1" width="1" height="2" fill="#8a8678"/><rect x="501" y="18" width="1" height="3" fill="#8a8678"/><rect x="509" y="1" width="1" height="2" fill="#8a8678"/><rect x="509" y="18" width="1" height="3" fill="#8a8678"/><rect x="517" y="1" width="1" height="2" fill="#8a8678"/><rect x="517" y="18" width="1" height="3" fill="#8a8678"/><rect x="525" y="1" width="1" height="2" fill="#8a8678"/><rect x="525" y="18" width="1" height="3" fill="#8a8678"/><rect x="533" y="1" width="1" height="2" fill="#8a8678"/><rect x="533" y="18" width="1" height="3" fill="#8a8678"/><rect x="541" y="1" width="1" height="2" fill="#8a8678"/><rect x="541" y="18" width="1" height="3" fill="#8a8678"/><rect x="549" y="1" width="1" height="2" fill="#8a8678"/><rect x="549" y="18" width="1" height="3" fill="#8a8678"/><rect x="557" y="1" width="1" height="2" fill="#8a8678"/><rect x="557" y="18" width="1" height="3" fill="#8a8678"/><rect x="565" y="1" width="1" height="2" fill="#8a8678"/><rect x="565" y="18" width="1" height="3" fill="#8a8678"/><rect x="573" y="1" width="1" height="2" fill="#8a8678"/><rect x="573" y="18" width="1" height="3" fill="#8a8678"/><rect x="581" y="1" width="1" height="2" fill="#8a8678"/><rect x="581" y="18" width="1" height="3" fill="#8a8678"/><rect x="589" y="1" width="1" height="2" fill="#8a8678"/><rect x="589" y="18" width="1" height="3" fill="#8a8678"/><rect x="597" y="1" width="1" height="2" fill="#8a8678"/><rect x="597" y="18" width="1" height="3" fill="#8a8678"/><rect x="605" y="1" width="1" height="2" fill="#8a8678"/><rect x="605" y="18" width="1" height="3" fill="#8a8678"/><rect x="613" y="1" width="1" height="2" fill="#8a8678"/><rect x="613" y="18" width="1" height="3" fill="#8a8678"/><rect x="621" y="1" width="1" height="2" fill="#8a8678"/><rect x="621" y="18" width="1" height="3" fill="#8a8678"/><rect x="629" y="1" width="1" height="2" fill="#8a8678"/><rect x="629" y="18" width="1" height="3" fill="#8a8678"/><rect x="637" y="1" width="1" height="2" fill="#8a8678"/><rect x="637" y="18" width="1" height="3" fill="#8a8678"/><rect x="645" y="1" width="1" height="2" fill="#8a8678"/><rect x="645" y="18" width="1" height="3" fill="#8a8678"/><rect x="653" y="1" width="1" height="2" fill="#8a8678"/><rect x="653" y="18" width="1" height="3" fill="#8a8678"/><rect x="661" y="1" width="1" height="2" fill="#8a8678"/><rect x="661" y="18" width="1" height="3" fill="#8a8678"/><rect x="669" y="1" width="1" height="2" fill="#8a8678"/><rect x="669" y="18" width="1" height="3" fill="#8a8678"/><rect x="677" y="1" width="1" height="2" fill="#8a8678"/><rect x="677" y="18" width="1" height="3" fill="#8a8678"/><rect x="685" y="1" width="1" height="2" fill="#8a8678"/><rect x="685" y="18" width="1" height="3" fill="#8a8678"/><rect x="693" y="1" width="1" height="2" fill="#8a8678"/><rect x="693" y="18" width="1" height="3" fill="#8a8678"/><rect x="701" y="1" width="1" height="2" fill="#8a8678"/><rect x="701" y="18" width="1" height="3" fill="#8a8678"/><rect x="709" y="1" width="1" height="2" fill="#8a8678"/><rect x="709" y="18" width="1" height="3" fill="#8a8678"/><rect x="717" y="1" width="1" height="2" fill="#8a8678"/><rect x="717" y="18" width="1" height="3" fill="#8a8678"/><rect x="725" y="1" width="1" height="2" fill="#8a8678"/><rect x="725" y="18" width="1" height="3" fill="#8a8678"/><rect x="733" y="1" width="1" height="2" fill="#8a8678"/><rect x="733" y="18" width="1" height="3" fill="#8a8678"/><rect x="741" y="1" width="1" height="2" fill="#8a8678"/><rect x="741" y="18" width="1" height="3" fill="#8a8678"/><rect x="749" y="1" width="1" height="2" fill="#8a8678"/><rect x="749" y="18" width="1" height="3" fill="#8a8678"/><rect x="757" y="1" width="1" height="2" fill="#8a8678"/><rect x="757" y="18" width="1" height="3" fill="#8a8678"/><rect x="765" y="1" width="1" height="2" fill="#8a8678"/><rect x="765" y="18" width="1" height="3" fill="#8a8678"/><rect x="773" y="1" width="1" height="2" fill="#8a8678"/><rect x="773" y="18" width="1" height="3" fill="#8a8678"/><rect x="781" y="1" width="1" height="2" fill="#8a8678"/><rect x="781" y="18" width="1" height="3" fill="#8a8678"/><rect x="789" y="1" width="1" height="2" fill="#8a8678"/><rect x="789" y="18" width="1" height="3" fill="#8a8678"/><rect x="797" y="1" width="1" height="2" fill="#8a8678"/><rect x="797" y="18" width="1" height="3" fill="#8a8678"/><rect x="805" y="1" width="1" height="2" fill="#8a8678"/><rect x="805" y="18" width="1" height="3" fill="#8a8678"/><rect x="813" y="1" width="1" height="2" fill="#8a8678"/><rect x="813" y="18" width="1" height="3" fill="#8a8678"/><rect x="821" y="1" width="1" height="2" fill="#8a8678"/><rect x="821" y="18" width="1" height="3" fill="#8a8678"/><rect x="829" y="1" width="1" height="2" fill="#8a8678"/><rect x="829" y="18" width="1" height="3" fill="#8a8678"/><rect x="837" y="1" width="1" height="2" fill="#8a8678"/><rect x="837" y="18" width="1" height="3" fill="#8a8678"/><rect x="845" y="1" width="1" height="2" fill="#8a8678"/><rect x="845" y="18" width="1" height="3" fill="#8a8678"/><rect x="853" y="1" width="1" height="2" fill="#8a8678"/><rect x="853" y="18" width="1" height="3" fill="#8a8678"/><rect x="861" y="1" width="1" height="2" fill="#8a8678"/><rect x="861" y="18" width="1" height="3" fill="#8a8678"/><rect x="869" y="1" width="1" height="2" fill="#8a8678"/><rect x="869" y="18" width="1" height="3" fill="#8a8678"/><rect x="877" y="1" width="1" height="2" fill="#8a8678"/><rect x="877" y="18" width="1" height="3" fill="#8a8678"/><rect x="885" y="1" width="1" height="2" fill="#8a8678"/><rect x="885" y="18" width="1" height="3" fill="#8a8678"/><rect x="893" y="1" width="1" height="2" fill="#8a8678"/><rect x="893" y="18" width="1" height="3" fill="#8a8678"/><rect x="901" y="1" width="1" height="2" fill="#8a8678"/><rect x="901" y="18" width="1" height="3" fill="#8a8678"/><rect x="909" y="1" width="1" height="2" fill="#8a8678"/><rect x="909" y="18" width="1" height="3" fill="#8a8678"/><rect x="917" y="1" width="1" height="2" fill="#8a8678"/><rect x="917" y="18" width="1" height="3" fill="#8a8678"/><rect x="925" y="1" width="1" height="2" fill="#8a8678"/><rect x="925" y="18" width="1" height="3" fill="#8a8678"/><rect x="933" y="1" width="1" height="2" fill="#8a8678"/><rect x="933" y="18" width="1" height="3" fill="#8a8678"/><rect x="941" y="1" width="1" height="2" fill="#8a8678"/><rect x="941" y="18" width="1" height="3" fill="#8a8678"/><rect x="949" y="1" width="1" height="2" fill="#8a8678"/><rect x="949" y="18" width="1" height="3" fill="#8a8678"/><rect x="957" y="1" width="1" height="2" fill="#8a8678"/><rect x="957" y="18" width="1" height="3" fill="#8a8678"/><rect x="965" y="1" width="1" height="2" fill="#8a8678"/><rect x="965" y="18" width="1" height="3" fill="#8a8678"/><rect x="973" y="1" width="1" height="2" fill="#8a8678"/><rect x="973" y="18" width="1" height="3" fill="#8a8678"/><rect x="981" y="1" width="1" height="2" fill="#8a8678"/><rect x="981" y="18" width="1" height="3" fill="#8a8678"/><rect x="989" y="1" width="1" height="2" fill="#8a8678"/><rect x="989" y="18" width="1" height="3" fill="#8a8678"/><rect x="997" y="1" width="1" height="2" fill="#8a8678"/><rect x="997" y="18" width="1" height="3" fill="#8a8678"/><rect x="1005" y="1" width="1" height="2" fill="#8a8678"/><rect x="1005" y="18" width="1" height="3" fill="#8a8678"/><rect x="1013" y="1" width="1" height="2" fill="#8a8678"/><rect x="1013" y="18" width="1" height="3" fill="#8a8678"/><rect x="1021" y="1" width="1" height="2" fill="#8a8678"/><rect x="1021" y="18" width="1" height="3" fill="#8a8678"/><rect x="1029" y="1" width="1" height="2" fill="#8a8678"/><rect x="1029" y="18" width="1" height="3" fill="#8a8678"/><rect x="1037" y="1" width="1" height="2" fill="#8a8678"/><rect x="1037" y="18" width="1" height="3" fill="#8a8678"/><rect x="1045" y="1" width="1" height="2" fill="#8a8678"/><rect x="1045" y="18" width="1" height="3" fill="#8a8678"/><rect x="1053" y="1" width="1" height="2" fill="#8a8678"/><rect x="1053" y="18" width="1" height="3" fill="#8a8678"/><rect x="1061" y="1" width="1" height="2" fill="#8a8678"/><rect x="1061" y="18" width="1" height="3" fill="#8a8678"/><rect x="1069" y="1" width="1" height="2" fill="#8a8678"/><rect x="1069" y="18" width="1" height="3" fill="#8a8678"/><rect x="1077" y="1" width="1" height="2" fill="#8a8678"/><rect x="1077" y="18" width="1" height="3" fill="#8a8678"/><rect x="1085" y="1" width="1" height="2" fill="#8a8678"/><rect x="1085" y="18" width="1" height="3" fill="#8a8678"/><rect x="1093" y="1" width="1" height="2" fill="#8a8678"/><rect x="1093" y="18" width="1" height="3" fill="#8a8678"/><rect x="1101" y="1" width="1" height="2" fill="#8a8678"/><rect x="1101" y="18" width="1" height="3" fill="#8a8678"/><rect x="1109" y="1" width="1" height="2" fill="#8a8678"/><rect x="1109" y="18" width="1" height="3" fill="#8a8678"/><rect x="1117" y="1" width="1" height="2" fill="#8a8678"/><rect x="1117" y="18" width="1" height="3" fill="#8a8678"/><rect x="1125" y="1" width="1" height="2" fill="#8a8678"/><rect x="1125" y="18" width="1" height="3" fill="#8a8678"/><rect x="1133" y="1" width="1" height="2" fill="#8a8678"/><rect x="1133" y="18" width="1" height="3" fill="#8a8678"/><rect x="1141" y="1" width="1" height="2" fill="#8a8678"/><rect x="1141" y="18" width="1" height="3" fill="#8a8678"/><rect x="1149" y="1" width="1" height="2" fill="#8a8678"/><rect x="1149" y="18" width="1" height="3" fill="#8a8678"/><rect x="1157" y="1" width="1" height="2" fill="#8a8678"/><rect x="1157" y="18" width="1" height="3" fill="#8a8678"/><rect x="1165" y="1" width="1" height="2" fill="#8a8678"/><rect x="1165" y="18" width="1" height="3" fill="#8a8678"/><rect x="1173" y="1" width="1" height="2" fill="#8a8678"/><rect x="1173" y="18" width="1" height="3" fill="#8a8678"/><rect x="1181" y="1" width="1" height="2" fill="#8a8678"/><rect x="1181" y="18" width="1" height="3" fill="#8a8678"/><rect x="1189" y="1" width="1" height="2" fill="#8a8678"/><rect x="1189" y="18" width="1" height="3" fill="#8a8678"/><rect x="1197" y="1" width="1" height="2" fill="#8a8678"/><rect x="1197" y="18" width="1" height="3" fill="#8a8678"/><rect x="1205" y="1" width="1" height="2" fill="#8a8678"/><rect x="1205" y="18" width="1" height="3" fill="#8a8678"/><rect x="1213" y="1" width="1" height="2" fill="#8a8678"/><rect x="1213" y="18" width="1" height="3" fill="#8a8678"/><rect x="1221" y="1" width="1" height="2" fill="#8a8678"/><rect x="1221" y="18" width="1" height="3" fill="#8a8678"/><rect x="1229" y="1" width="1" height="2" fill="#8a8678"/><rect x="1229" y="18" width="1" height="3" fill="#8a8678"/><rect x="1237" y="1" width="1" height="2" fill="#8a8678"/><rect x="1237" y="18" width="1" height="3" fill="#8a8678"/><rect x="1245" y="1" width="1" height="2" fill="#8a8678"/><rect x="1245" y="18" width="1" height="3" fill="#8a8678"/><rect x="1253" y="1" width="1" height="2" fill="#8a8678"/><rect x="1253" y="18" width="1" height="3" fill="#8a8678"/><rect x="1261" y="1" width="1" height="2" fill="#8a8678"/><rect x="1261" y="18" width="1" height="3" fill="#8a8678"/><rect x="1269" y="1" width="1" height="2" fill="#8a8678"/><rect x="1269" y="18" width="1" height="3" fill="#8a8678"/><rect x="1277" y="1" width="1" height="2" fill="#8a8678"/><rect x="1277" y="18" width="1" height="3" fill="#8a8678"/><rect x="1285" y="1" width="1" height="2" fill="#8a8678"/><rect x="1285" y="18" width="1" height="3" fill="#8a8678"/><rect x="1293" y="1" width="1" height="2" fill="#8a8678"/><rect x="1293" y="18" width="1" height="3" fill="#8a8678"/><rect x="1301" y="1" width="1" height="2" fill="#8a8678"/><rect x="1301" y="18" width="1" height="3" fill="#8a8678"/><rect x="1309" y="1" width="1" height="2" fill="#8a8678"/><rect x="1309" y="18" width="1" height="3" fill="#8a8678"/><rect x="1317" y="1" width="1" height="2" fill="#8a8678"/><rect x="1317" y="18" width="1" height="3" fill="#8a8678"/><rect x="1325" y="1" width="1" height="2" fill="#8a8678"/><rect x="1325" y="18" width="1" height="3" fill="#8a8678"/><rect x="1333" y="1" width="1" height="2" fill="#8a8678"/><rect x="1333" y="18" width="1" height="3" fill="#8a8678"/><rect x="1341" y="1" width="1" height="2" fill="#8a8678"/><rect x="1341" y="18" width="1" height="3" fill="#8a8678"/></svg><div style="left:0;top:0;width:1439px;height:160px;overflow:hidden"><div style="left:263px;top:130px;width:30px;text-align:center;font-size:11px;line-height:1;color:#111">5</div><div style="left:303px;top:130px;width:30px;text-align:center;font-size:11px;line-height:1;color:#111">10</div><div style="left:343px;top:130px;width:30px;text-align:center;font-size:11px;line-height:1;color:#111">15</div><div style="left:383px;top:130px;width:30px;text-align:center;font-size:11px;line-height:1;color:#111">20</div><div style="left:423px;top:130px;width:30px;text-align:center;font-size:11px;line-height:1;color:#111">25</div><div style="left:463px;top:130px;width:30px;text-align:center;font-size:11px;line-height:1;color:#111">30</div><div style="left:503px;top:130px;width:30px;text-align:center;font-size:11px;line-height:1;color:#111">35</div><div style="left:543px;top:130px;width:30px;text-align:center;font-size:11px;line-height:1;color:#111">40</div><div style="left:583px;top:130px;width:30px;text-align:center;font-size:11px;line-height:1;color:#111">45</div><div style="left:623px;top:130px;width:30px;text-align:center;font-size:11px;line-height:1;color:#111">50</div><div style="left:663px;top:130px;width:30px;text-align:center;font-size:11px;line-height:1;color:#111">55</div><div style="left:703px;top:130px;width:30px;text-align:center;font-size:11px;line-height:1;color:#111">60</div><div style="left:743px;top:130px;width:30px;text-align:center;font-size:11px;line-height:1;color:#111">65</div><div style="left:783px;top:130px;width:30px;text-align:center;font-size:11px;line-height:1;color:#111">70</div><div style="left:823px;top:130px;width:30px;text-align:center;font-size:11px;line-height:1;color:#111">75</div><div style="left:863px;top:130px;width:30px;text-align:center;font-size:11px;line-height:1;color:#111">80</div><div style="left:903px;top:130px;width:30px;text-align:center;font-size:11px;line-height:1;color:#111">85</div><div style="left:943px;top:130px;width:30px;text-align:center;font-size:11px;line-height:1;color:#111">90</div><div style="left:983px;top:130px;width:30px;text-align:center;font-size:11px;line-height:1;color:#111">95</div><div style="left:1023px;top:130px;width:30px;text-align:center;font-size:11px;line-height:1;color:#111">100</div><div style="left:1063px;top:130px;width:30px;text-align:center;font-size:11px;line-height:1;color:#111">105</div><div style="left:1103px;top:130px;width:30px;text-align:center;font-size:11px;line-height:1;color:#111">110</div><div style="left:1143px;top:130px;width:30px;text-align:center;font-size:11px;line-height:1;color:#111">115</div><div style="left:1183px;top:130px;width:30px;text-align:center;font-size:11px;line-height:1;color:#111">120</div><div style="left:1223px;top:130px;width:30px;text-align:center;font-size:11px;line-height:1;color:#111">125</div><div style="left:1263px;top:130px;width:30px;text-align:center;font-size:11px;line-height:1;color:#111">130</div><div style="left:1303px;top:130px;width:30px;text-align:center;font-size:11px;line-height:1;color:#111">135</div><div style="left:1343px;top:130px;width:30px;text-align:center;font-size:11px;line-height:1;color:#111">140</div><div style="left:1383px;top:130px;width:30px;text-align:center;font-size:11px;line-height:1;color:#111">145</div><div style="left:1423px;top:130px;width:30px;text-align:center;font-size:11px;line-height:1;color:#111">150</div></div><div style="position:absolute;left:93px;top:146px;width:1346px;height:1px;background:#fff"></div><div style="position:absolute;left:94px;top:147px;width:148px;height:16px;background:#316ac5"></div><div style="position:absolute;left:96px;top:151px;white-space:nowrap;line-height:1;font-size:11px;color:#fff">Layer1</div><svg style="position:absolute;left:192px;top:153px;" width="6" height="6" viewBox="0 0 6 6"><circle cx="3" cy="3" r="2.2" fill="#000"/></svg><svg style="position:absolute;left:210px;top:153px;" width="6" height="6" viewBox="0 0 6 6"><circle cx="3" cy="3" r="2.2" fill="#000"/></svg><div style="position:absolute;left:226px;top:151px;width:10px;height:10px;background:#00dc00"></div><div style="position:absolute;left:242px;top:146px;width:1196px;height:18px;background:#fff"></div><svg style="position:absolute;left:242px;top:146px;" width="1196" height="17" viewBox="0 0 1196 17"><rect x="8" y="0" width="1" height="17" fill="#e6e2d0"/><rect x="16" y="0" width="1" height="17" fill="#e6e2d0"/><rect x="24" y="0" width="1" height="17" fill="#e6e2d0"/><rect x="32" y="0" width="8" height="17" fill="#f3f1e8"/><rect x="32" y="0" width="1" height="17" fill="#e6e2d0"/><rect x="40" y="0" width="1" height="17" fill="#e6e2d0"/><rect x="48" y="0" width="1" height="17" fill="#e6e2d0"/><rect x="56" y="0" width="1" height="17" fill="#e6e2d0"/><rect x="64" y="0" width="1" height="17" fill="#e6e2d0"/><rect x="72" y="0" width="8" height="17" fill="#f3f1e8"/><rect x="72" y="0" width="1" height="17" fill="#e6e2d0"/><rect x="80" y="0" width="1" height="17" fill="#e6e2d0"/><rect x="88" y="0" width="1" height="17" fill="#e6e2d0"/><rect x="96" y="0" width="1" height="17" fill="#e6e2d0"/><rect x="104" y="0" width="1" height="17" fill="#e6e2d0"/><rect x="112" y="0" width="8" height="17" fill="#f3f1e8"/><rect x="112" y="0" width="1" height="17" fill="#e6e2d0"/><rect x="120" y="0" width="1" height="17" fill="#e6e2d0"/><rect x="128" y="0" width="1" height="17" fill="#e6e2d0"/><rect x="136" y="0" width="1" height="17" fill="#e6e2d0"/><rect x="144" y="0" width="1" height="17" fill="#e6e2d0"/><rect x="152" y="0" width="8" height="17" fill="#f3f1e8"/><rect x="152" y="0" width="1" height="17" fill="#e6e2d0"/><rect x="160" y="0" width="1" height="17" fill="#e6e2d0"/><rect x="168" y="0" width="1" height="17" fill="#e6e2d0"/><rect x="176" y="0" width="1" height="17" fill="#e6e2d0"/><rect x="184" y="0" width="1" height="17" fill="#e6e2d0"/><rect x="192" y="0" width="8" height="17" fill="#f3f1e8"/><rect x="192" y="0" width="1" height="17" fill="#e6e2d0"/><rect x="200" y="0" width="1" height="17" fill="#e6e2d0"/><rect x="208" y="0" width="1" height="17" fill="#e6e2d0"/><rect x="216" y="0" width="1" height="17" fill="#e6e2d0"/><rect x="224" y="0" width="1" height="17" fill="#e6e2d0"/><rect x="232" y="0" width="8" height="17" fill="#f3f1e8"/><rect x="232" y="0" width="1" height="17" fill="#e6e2d0"/><rect x="240" y="0" width="1" height="17" fill="#e6e2d0"/><rect x="248" y="0" width="1" height="17" fill="#e6e2d0"/><rect x="256" y="0" width="1" height="17" fill="#e6e2d0"/><rect x="264" y="0" width="1" height="17" fill="#e6e2d0"/><rect x="272" y="0" width="8" height="17" fill="#f3f1e8"/><rect x="272" y="0" width="1" height="17" fill="#e6e2d0"/><rect x="280" y="0" width="1" height="17" fill="#e6e2d0"/><rect x="288" y="0" width="1" height="17" fill="#e6e2d0"/><rect x="296" y="0" width="1" height="17" fill="#e6e2d0"/><rect x="304" y="0" width="1" height="17" fill="#e6e2d0"/><rect x="312" y="0" width="8" height="17" fill="#f3f1e8"/><rect x="312" y="0" width="1" height="17" fill="#e6e2d0"/><rect x="320" y="0" width="1" height="17" fill="#e6e2d0"/><rect x="328" y="0" width="1" height="17" fill="#e6e2d0"/><rect x="336" y="0" width="1" height="17" fill="#e6e2d0"/><rect x="344" y="0" width="1" height="17" fill="#e6e2d0"/><rect x="352" y="0" width="8" height="17" fill="#f3f1e8"/><rect x="352" y="0" width="1" height="17" fill="#e6e2d0"/><rect x="360" y="0" width="1" height="17" fill="#e6e2d0"/><rect x="368" y="0" width="1" height="17" fill="#e6e2d0"/><rect x="376" y="0" width="1" height="17" fill="#e6e2d0"/><rect x="384" y="0" width="1" height="17" fill="#e6e2d0"/><rect x="392" y="0" width="8" height="17" fill="#f3f1e8"/><rect x="392" y="0" width="1" height="17" fill="#e6e2d0"/><rect x="400" y="0" width="1" height="17" fill="#e6e2d0"/><rect x="408" y="0" width="1" height="17" fill="#e6e2d0"/><rect x="416" y="0" width="1" height="17" fill="#e6e2d0"/><rect x="424" y="0" width="1" height="17" fill="#e6e2d0"/><rect x="432" y="0" width="8" height="17" fill="#f3f1e8"/><rect x="432" y="0" width="1" height="17" fill="#e6e2d0"/><rect x="440" y="0" width="1" height="17" fill="#e6e2d0"/><rect x="448" y="0" width="1" height="17" fill="#e6e2d0"/><rect x="456" y="0" width="1" height="17" fill="#e6e2d0"/><rect x="464" y="0" width="1" height="17" fill="#e6e2d0"/><rect x="472" y="0" width="8" height="17" fill="#f3f1e8"/><rect x="472" y="0" width="1" height="17" fill="#e6e2d0"/><rect x="480" y="0" width="1" height="17" fill="#e6e2d0"/><rect x="488" y="0" width="1" height="17" fill="#e6e2d0"/><rect x="496" y="0" width="1" height="17" fill="#e6e2d0"/><rect x="504" y="0" width="1" height="17" fill="#e6e2d0"/><rect x="512" y="0" width="8" height="17" fill="#f3f1e8"/><rect x="512" y="0" width="1" height="17" fill="#e6e2d0"/><rect x="520" y="0" width="1" height="17" fill="#e6e2d0"/><rect x="528" y="0" width="1" height="17" fill="#e6e2d0"/><rect x="536" y="0" width="1" height="17" fill="#e6e2d0"/><rect x="544" y="0" width="1" height="17" fill="#e6e2d0"/><rect x="552" y="0" width="8" height="17" fill="#f3f1e8"/><rect x="552" y="0" width="1" height="17" fill="#e6e2d0"/><rect x="560" y="0" width="1" height="17" fill="#e6e2d0"/><rect x="568" y="0" width="1" height="17" fill="#e6e2d0"/><rect x="576" y="0" width="1" height="17" fill="#e6e2d0"/><rect x="584" y="0" width="1" height="17" fill="#e6e2d0"/><rect x="592" y="0" width="8" height="17" fill="#f3f1e8"/><rect x="592" y="0" width="1" height="17" fill="#e6e2d0"/><rect x="600" y="0" width="1" height="17" fill="#e6e2d0"/><rect x="608" y="0" width="1" height="17" fill="#e6e2d0"/><rect x="616" y="0" width="1" height="17" fill="#e6e2d0"/><rect x="624" y="0" width="1" height="17" fill="#e6e2d0"/><rect x="632" y="0" width="8" height="17" fill="#f3f1e8"/><rect x="632" y="0" width="1" height="17" fill="#e6e2d0"/><rect x="640" y="0" width="1" height="17" fill="#e6e2d0"/><rect x="648" y="0" width="1" height="17" fill="#e6e2d0"/><rect x="656" y="0" width="1" height="17" fill="#e6e2d0"/><rect x="664" y="0" width="1" height="17" fill="#e6e2d0"/><rect x="672" y="0" width="8" height="17" fill="#f3f1e8"/><rect x="672" y="0" width="1" height="17" fill="#e6e2d0"/><rect x="680" y="0" width="1" height="17" fill="#e6e2d0"/><rect x="688" y="0" width="1" height="17" fill="#e6e2d0"/><rect x="696" y="0" width="1" height="17" fill="#e6e2d0"/><rect x="704" y="0" width="1" height="17" fill="#e6e2d0"/><rect x="712" y="0" width="8" height="17" fill="#f3f1e8"/><rect x="712" y="0" width="1" height="17" fill="#e6e2d0"/><rect x="720" y="0" width="1" height="17" fill="#e6e2d0"/><rect x="728" y="0" width="1" height="17" fill="#e6e2d0"/><rect x="736" y="0" width="1" height="17" fill="#e6e2d0"/><rect x="744" y="0" width="1" height="17" fill="#e6e2d0"/><rect x="752" y="0" width="8" height="17" fill="#f3f1e8"/><rect x="752" y="0" width="1" height="17" fill="#e6e2d0"/><rect x="760" y="0" width="1" height="17" fill="#e6e2d0"/><rect x="768" y="0" width="1" height="17" fill="#e6e2d0"/><rect x="776" y="0" width="1" height="17" fill="#e6e2d0"/><rect x="784" y="0" width="1" height="17" fill="#e6e2d0"/><rect x="792" y="0" width="8" height="17" fill="#f3f1e8"/><rect x="792" y="0" width="1" height="17" fill="#e6e2d0"/><rect x="800" y="0" width="1" height="17" fill="#e6e2d0"/><rect x="808" y="0" width="1" height="17" fill="#e6e2d0"/><rect x="816" y="0" width="1" height="17" fill="#e6e2d0"/><rect x="824" y="0" width="1" height="17" fill="#e6e2d0"/><rect x="832" y="0" width="8" height="17" fill="#f3f1e8"/><rect x="832" y="0" width="1" height="17" fill="#e6e2d0"/><rect x="840" y="0" width="1" height="17" fill="#e6e2d0"/><rect x="848" y="0" width="1" height="17" fill="#e6e2d0"/><rect x="856" y="0" width="1" height="17" fill="#e6e2d0"/><rect x="864" y="0" width="1" height="17" fill="#e6e2d0"/><rect x="872" y="0" width="8" height="17" fill="#f3f1e8"/><rect x="872" y="0" width="1" height="17" fill="#e6e2d0"/><rect x="880" y="0" width="1" height="17" fill="#e6e2d0"/><rect x="888" y="0" width="1" height="17" fill="#e6e2d0"/><rect x="896" y="0" width="1" height="17" fill="#e6e2d0"/><rect x="904" y="0" width="1" height="17" fill="#e6e2d0"/><rect x="912" y="0" width="8" height="17" fill="#f3f1e8"/><rect x="912" y="0" width="1" height="17" fill="#e6e2d0"/><rect x="920" y="0" width="1" height="17" fill="#e6e2d0"/><rect x="928" y="0" width="1" height="17" fill="#e6e2d0"/><rect x="936" y="0" width="1" height="17" fill="#e6e2d0"/><rect x="944" y="0" width="1" height="17" fill="#e6e2d0"/><rect x="952" y="0" width="8" height="17" fill="#f3f1e8"/><rect x="952" y="0" width="1" height="17" fill="#e6e2d0"/><rect x="960" y="0" width="1" height="17" fill="#e6e2d0"/><rect x="968" y="0" width="1" height="17" fill="#e6e2d0"/><rect x="976" y="0" width="1" height="17" fill="#e6e2d0"/><rect x="984" y="0" width="1" height="17" fill="#e6e2d0"/><rect x="992" y="0" width="8" height="17" fill="#f3f1e8"/><rect x="992" y="0" width="1" height="17" fill="#e6e2d0"/><rect x="1000" y="0" width="1" height="17" fill="#e6e2d0"/><rect x="1008" y="0" width="1" height="17" fill="#e6e2d0"/><rect x="1016" y="0" width="1" height="17" fill="#e6e2d0"/><rect x="1024" y="0" width="1" height="17" fill="#e6e2d0"/><rect x="1032" y="0" width="8" height="17" fill="#f3f1e8"/><rect x="1032" y="0" width="1" height="17" fill="#e6e2d0"/><rect x="1040" y="0" width="1" height="17" fill="#e6e2d0"/><rect x="1048" y="0" width="1" height="17" fill="#e6e2d0"/><rect x="1056" y="0" width="1" height="17" fill="#e6e2d0"/><rect x="1064" y="0" width="1" height="17" fill="#e6e2d0"/><rect x="1072" y="0" width="8" height="17" fill="#f3f1e8"/><rect x="1072" y="0" width="1" height="17" fill="#e6e2d0"/><rect x="1080" y="0" width="1" height="17" fill="#e6e2d0"/><rect x="1088" y="0" width="1" height="17" fill="#e6e2d0"/><rect x="1096" y="0" width="1" height="17" fill="#e6e2d0"/><rect x="1104" y="0" width="1" height="17" fill="#e6e2d0"/><rect x="1112" y="0" width="8" height="17" fill="#f3f1e8"/><rect x="1112" y="0" width="1" height="17" fill="#e6e2d0"/><rect x="1120" y="0" width="1" height="17" fill="#e6e2d0"/><rect x="1128" y="0" width="1" height="17" fill="#e6e2d0"/><rect x="1136" y="0" width="1" height="17" fill="#e6e2d0"/><rect x="1144" y="0" width="1" height="17" fill="#e6e2d0"/><rect x="1152" y="0" width="8" height="17" fill="#f3f1e8"/><rect x="1152" y="0" width="1" height="17" fill="#e6e2d0"/><rect x="1160" y="0" width="1" height="17" fill="#e6e2d0"/><rect x="1168" y="0" width="1" height="17" fill="#e6e2d0"/><rect x="1176" y="0" width="1" height="17" fill="#e6e2d0"/><rect x="1184" y="0" width="1" height="17" fill="#e6e2d0"/><rect x="1192" y="0" width="8" height="17" fill="#f3f1e8"/><rect x="1192" y="0" width="1" height="17" fill="#e6e2d0"/></svg><div style="position:absolute;left:242px;top:146px;width:9px;height:18px;border:1px solid #333;background:#fff"></div><div style="position:absolute;left:246px;top:146px;width:1px;height:18px;background:#e00000"></div><svg style="position:absolute;left:243px;top:156px;" width="7" height="7" viewBox="0 0 7 7"><ellipse cx="3.5" cy="3.5" rx="2.7" ry="2.5" fill="none" stroke="#111" stroke-width="0.9"/></svg><div style="position:absolute;left:93px;top:164px;width:1346px;height:38px;background:#c4c4c4"></div><div style="position:absolute;left:93px;top:202px;width:180px;height:16px;background:#8c8c8c"></div><svg style="position:absolute;left:92px;top:202px;" width="18" height="17" viewBox="0 0 18 17"><defs><linearGradient id="alg" x1="0" y1="0" x2="1" y2="1"><stop offset="0" stop-color="#fff"/><stop offset="1" stop-color="#d8d8d8"/></linearGradient></defs><path d="M3.7 1.5 H16.5 V10.5 L12.5 14.5 H3.7 Z" fill="url(#alg)" stroke="#444" stroke-width="1"/><path d="M16.5 10.5 H12.5 V14.5" fill="#ccc" stroke="#666" stroke-width="0.8"/><circle cx="5.5" cy="7.5" r="4.4" fill="#2a9e48" stroke="#1a8038" stroke-width="0.8"/><path d="M5.5 5 V10 M3 7.5 H8" stroke="#fff" stroke-width="1.4"/></svg><div style="position:absolute;left:115px;top:207px;width:3px;height:6px;border:1px solid #b8b8b8;border-radius:1px;background:#555"></div><svg style="position:absolute;left:127px;top:204px;" width="13" height="13" viewBox="0 0 13 13"><path d="M2 2 L11 11 M11 2 L2 11" stroke="#5a6a7a" stroke-width="3.2" stroke-linecap="round"/></svg><svg style="position:absolute;left:244px;top:204px;" width="12" height="11" viewBox="0 0 12 11"><rect x="0.5" y="0.5" width="7" height="6" fill="#80b0e0" stroke="#3070c0"/><rect x="4" y="4" width="7.5" height="6.5" fill="#80b0e0" stroke="#3070c0"/></svg><div style="position:absolute;left:273px;top:202px;width:1166px;height:16px;background:linear-gradient(#eceae0,#f6f5f0 45%,#fefefc)"></div><div style="position:absolute;left:273px;top:203px;width:15px;height:15px;background:linear-gradient(135deg,#dce8ff,#b8cdfa);border:1px solid #b4c8f0;border-radius:2px"><svg style="position:absolute;left:0px;top:0px;" width="13" height="13" viewBox="0 0 13 13"><path d="M9 3.5 L5.5 7.5 L9 11.5" transform="translate(-0.5,-0.5)" fill="none" stroke="#4d6185" stroke-width="2"/></svg></div><div style="position:absolute;left:290px;top:203px;width:286px;height:15px;background:linear-gradient(#cfdcfc,#c2d4fb 50%,#b6c9f5);border:1px solid #a9bff0;border-radius:2px;box-shadow:inset 1px 1px 0 #e8f0ff"></div><svg style="position:absolute;left:429px;top:207px;" width="8" height="7" viewBox="0 0 8 7"><path d="M0.5 0 V7 M2.5 0 V7 M4.5 0 V7 M6.5 0 V7" stroke="#eef3ff" stroke-width="1"/><path d="M1.5 0 V7 M3.5 0 V7 M5.5 0 V7 M7.5 0 V7" stroke="#8fa8e0" stroke-width="1"/></svg><div style="position:absolute;left:1422px;top:203px;width:15px;height:15px;background:linear-gradient(135deg,#dce8ff,#b8cdfa);border:1px solid #b4c8f0;border-radius:2px"><svg style="position:absolute;left:0px;top:0px;" width="13" height="13" viewBox="0 0 13 13"><path d="M6 3.5 L9.5 7.5 L6 11.5" transform="translate(-0.5,-0.5)" fill="none" stroke="#4d6185" stroke-width="2"/></svg></div><div style="position:absolute;left:1439px;top:123px;width:17px;height:79px;background:linear-gradient(90deg,#f4f3ee,#fdfdfb)"></div><div style="position:absolute;left:1439px;top:123px;width:15px;height:15px;background:linear-gradient(135deg,#fbfbf8,#ecebe4);border:1px solid #e0ddd0;border-radius:2px"><svg style="position:absolute;left:0px;top:0px;" width="13" height="13" viewBox="0 0 13 13"><path d="M3.5 9 L7.5 5.5 L11.5 9" transform="translate(-0.5,-0.5)" fill="none" stroke="#c8c8c0" stroke-width="2"/></svg></div><div style="position:absolute;left:1439px;top:184px;width:15px;height:15px;background:linear-gradient(135deg,#fbfbf8,#ecebe4);border:1px solid #e0ddd0;border-radius:2px"><svg style="position:absolute;left:0px;top:0px;" width="13" height="13" viewBox="0 0 13 13"><path d="M3.5 6 L7.5 9.5 L11.5 6" transform="translate(-0.5,-0.5)" fill="none" stroke="#c8c8c0" stroke-width="2"/></svg></div><div style="position:absolute;left:1439px;top:202px;width:17px;height:17px;background:#c4c4c4"></div><div style="position:absolute;left:89px;top:221px;width:1370px;height:4px;background:#ece9d8"></div><div style="position:absolute;left:89px;top:225px;width:1370px;height:526px;background:#ece9d8;border-top:1px solid #f4f2e6;border-left:1px solid #f4f2e6;border-right:1px solid #555;border-bottom:1px solid #555;box-shadow:inset 1px 1px 0 #555"></div><div style="position:absolute;left:109px;top:227px;width:1348px;height:1px;background:#fff"></div><div style="position:absolute;left:91px;top:245px;width:1px;height:490px;background:#fff"></div><div style="position:absolute;left:109px;top:245px;width:1331px;height:487px;background:#d0d0d0"></div><div style="position:absolute;left:499px;top:288px;width:550px;height:400px;background:#fff"></div><div style="left:109px;top:227px;width:1348px;height:18px;overflow:hidden;background:#ece9d8;border-top:1px solid #fff"><svg style="left:0;top:0" width="1348" height="18"><rect x="0" y="13" width="1" height="4" fill="#000"/><rect x="5" y="15" width="1" height="2" fill="#000"/><rect x="10" y="13" width="1" height="4" fill="#000"/><rect x="15" y="15" width="1" height="2" fill="#000"/><rect x="20" y="13" width="1" height="4" fill="#000"/><rect x="25" y="15" width="1" height="2" fill="#000"/><rect x="30" y="13" width="1" height="4" fill="#000"/><rect x="35" y="15" width="1" height="2" fill="#000"/><rect x="40" y="0" width="1" height="17" fill="#000"/><rect x="45" y="15" width="1" height="2" fill="#000"/><rect x="50" y="13" width="1" height="4" fill="#000"/><rect x="55" y="15" width="1" height="2" fill="#000"/><rect x="60" y="13" width="1" height="4" fill="#000"/><rect x="65" y="15" width="1" height="2" fill="#000"/><rect x="70" y="13" width="1" height="4" fill="#000"/><rect x="75" y="15" width="1" height="2" fill="#000"/><rect x="80" y="13" width="1" height="4" fill="#000"/><rect x="85" y="15" width="1" height="2" fill="#000"/><rect x="90" y="0" width="1" height="17" fill="#000"/><rect x="95" y="15" width="1" height="2" fill="#000"/><rect x="100" y="13" width="1" height="4" fill="#000"/><rect x="105" y="15" width="1" height="2" fill="#000"/><rect x="110" y="13" width="1" height="4" fill="#000"/><rect x="115" y="15" width="1" height="2" fill="#000"/><rect x="120" y="13" width="1" height="4" fill="#000"/><rect x="125" y="15" width="1" height="2" fill="#000"/><rect x="130" y="13" width="1" height="4" fill="#000"/><rect x="135" y="15" width="1" height="2" fill="#000"/><rect x="140" y="0" width="1" height="17" fill="#000"/><rect x="145" y="15" width="1" height="2" fill="#000"/><rect x="150" y="13" width="1" height="4" fill="#000"/><rect x="155" y="15" width="1" height="2" fill="#000"/><rect x="160" y="13" width="1" height="4" fill="#000"/><rect x="165" y="15" width="1" height="2" fill="#000"/><rect x="170" y="13" width="1" height="4" fill="#000"/><rect x="175" y="15" width="1" height="2" fill="#000"/><rect x="180" y="13" width="1" height="4" fill="#000"/><rect x="185" y="15" width="1" height="2" fill="#000"/><rect x="190" y="0" width="1" height="17" fill="#000"/><rect x="195" y="15" width="1" height="2" fill="#000"/><rect x="200" y="13" width="1" height="4" fill="#000"/><rect x="205" y="15" width="1" height="2" fill="#000"/><rect x="210" y="13" width="1" height="4" fill="#000"/><rect x="215" y="15" width="1" height="2" fill="#000"/><rect x="220" y="13" width="1" height="4" fill="#000"/><rect x="225" y="15" width="1" height="2" fill="#000"/><rect x="230" y="13" width="1" height="4" fill="#000"/><rect x="235" y="15" width="1" height="2" fill="#000"/><rect x="240" y="0" width="1" height="17" fill="#000"/><rect x="245" y="15" width="1" height="2" fill="#000"/><rect x="250" y="13" width="1" height="4" fill="#000"/><rect x="255" y="15" width="1" height="2" fill="#000"/><rect x="260" y="13" width="1" height="4" fill="#000"/><rect x="265" y="15" width="1" height="2" fill="#000"/><rect x="270" y="13" width="1" height="4" fill="#000"/><rect x="275" y="15" width="1" height="2" fill="#000"/><rect x="280" y="13" width="1" height="4" fill="#000"/><rect x="285" y="15" width="1" height="2" fill="#000"/><rect x="290" y="0" width="1" height="17" fill="#000"/><rect x="295" y="15" width="1" height="2" fill="#000"/><rect x="300" y="13" width="1" height="4" fill="#000"/><rect x="305" y="15" width="1" height="2" fill="#000"/><rect x="310" y="13" width="1" height="4" fill="#000"/><rect x="315" y="15" width="1" height="2" fill="#000"/><rect x="320" y="13" width="1" height="4" fill="#000"/><rect x="325" y="15" width="1" height="2" fill="#000"/><rect x="330" y="13" width="1" height="4" fill="#000"/><rect x="335" y="15" width="1" height="2" fill="#000"/><rect x="340" y="0" width="1" height="17" fill="#000"/><rect x="345" y="15" width="1" height="2" fill="#000"/><rect x="350" y="13" width="1" height="4" fill="#000"/><rect x="355" y="15" width="1" height="2" fill="#000"/><rect x="360" y="13" width="1" height="4" fill="#000"/><rect x="365" y="15" width="1" height="2" fill="#000"/><rect x="370" y="13" width="1" height="4" fill="#000"/><rect x="375" y="15" width="1" height="2" fill="#000"/><rect x="380" y="13" width="1" height="4" fill="#000"/><rect x="385" y="15" width="1" height="2" fill="#000"/><rect x="390" y="0" width="1" height="17" fill="#000"/><rect x="395" y="15" width="1" height="2" fill="#000"/><rect x="400" y="13" width="1" height="4" fill="#000"/><rect x="405" y="15" width="1" height="2" fill="#000"/><rect x="410" y="13" width="1" height="4" fill="#000"/><rect x="415" y="15" width="1" height="2" fill="#000"/><rect x="420" y="13" width="1" height="4" fill="#000"/><rect x="425" y="15" width="1" height="2" fill="#000"/><rect x="430" y="13" width="1" height="4" fill="#000"/><rect x="435" y="15" width="1" height="2" fill="#000"/><rect x="440" y="0" width="1" height="17" fill="#000"/><rect x="445" y="15" width="1" height="2" fill="#000"/><rect x="450" y="13" width="1" height="4" fill="#000"/><rect x="455" y="15" width="1" height="2" fill="#000"/><rect x="460" y="13" width="1" height="4" fill="#000"/><rect x="465" y="15" width="1" height="2" fill="#000"/><rect x="470" y="13" width="1" height="4" fill="#000"/><rect x="475" y="15" width="1" height="2" fill="#000"/><rect x="480" y="13" width="1" height="4" fill="#000"/><rect x="485" y="15" width="1" height="2" fill="#000"/><rect x="490" y="0" width="1" height="17" fill="#000"/><rect x="495" y="15" width="1" height="2" fill="#000"/><rect x="500" y="13" width="1" height="4" fill="#000"/><rect x="505" y="15" width="1" height="2" fill="#000"/><rect x="510" y="13" width="1" height="4" fill="#000"/><rect x="515" y="15" width="1" height="2" fill="#000"/><rect x="520" y="13" width="1" height="4" fill="#000"/><rect x="525" y="15" width="1" height="2" fill="#000"/><rect x="530" y="13" width="1" height="4" fill="#000"/><rect x="535" y="15" width="1" height="2" fill="#000"/><rect x="540" y="0" width="1" height="17" fill="#000"/><rect x="545" y="15" width="1" height="2" fill="#000"/><rect x="550" y="13" width="1" height="4" fill="#000"/><rect x="555" y="15" width="1" height="2" fill="#000"/><rect x="560" y="13" width="1" height="4" fill="#000"/><rect x="565" y="15" width="1" height="2" fill="#000"/><rect x="570" y="13" width="1" height="4" fill="#000"/><rect x="575" y="15" width="1" height="2" fill="#000"/><rect x="580" y="13" width="1" height="4" fill="#000"/><rect x="585" y="15" width="1" height="2" fill="#000"/><rect x="590" y="0" width="1" height="17" fill="#000"/><rect x="595" y="15" width="1" height="2" fill="#000"/><rect x="600" y="13" width="1" height="4" fill="#000"/><rect x="605" y="15" width="1" height="2" fill="#000"/><rect x="610" y="13" width="1" height="4" fill="#000"/><rect x="615" y="15" width="1" height="2" fill="#000"/><rect x="620" y="13" width="1" height="4" fill="#000"/><rect x="625" y="15" width="1" height="2" fill="#000"/><rect x="630" y="13" width="1" height="4" fill="#000"/><rect x="635" y="15" width="1" height="2" fill="#000"/><rect x="640" y="0" width="1" height="17" fill="#000"/><rect x="645" y="15" width="1" height="2" fill="#000"/><rect x="650" y="13" width="1" height="4" fill="#000"/><rect x="655" y="15" width="1" height="2" fill="#000"/><rect x="660" y="13" width="1" height="4" fill="#000"/><rect x="665" y="15" width="1" height="2" fill="#000"/><rect x="670" y="13" width="1" height="4" fill="#000"/><rect x="675" y="15" width="1" height="2" fill="#000"/><rect x="680" y="13" width="1" height="4" fill="#000"/><rect x="685" y="15" width="1" height="2" fill="#000"/><rect x="690" y="0" width="1" height="17" fill="#000"/><rect x="695" y="15" width="1" height="2" fill="#000"/><rect x="700" y="13" width="1" height="4" fill="#000"/><rect x="705" y="15" width="1" height="2" fill="#000"/><rect x="710" y="13" width="1" height="4" fill="#000"/><rect x="715" y="15" width="1" height="2" fill="#000"/><rect x="720" y="13" width="1" height="4" fill="#000"/><rect x="725" y="15" width="1" height="2" fill="#000"/><rect x="730" y="13" width="1" height="4" fill="#000"/><rect x="735" y="15" width="1" height="2" fill="#000"/><rect x="740" y="0" width="1" height="17" fill="#000"/><rect x="745" y="15" width="1" height="2" fill="#000"/><rect x="750" y="13" width="1" height="4" fill="#000"/><rect x="755" y="15" width="1" height="2" fill="#000"/><rect x="760" y="13" width="1" height="4" fill="#000"/><rect x="765" y="15" width="1" height="2" fill="#000"/><rect x="770" y="13" width="1" height="4" fill="#000"/><rect x="775" y="15" width="1" height="2" fill="#000"/><rect x="780" y="13" width="1" height="4" fill="#000"/><rect x="785" y="15" width="1" height="2" fill="#000"/><rect x="790" y="0" width="1" height="17" fill="#000"/><rect x="795" y="15" width="1" height="2" fill="#000"/><rect x="800" y="13" width="1" height="4" fill="#000"/><rect x="805" y="15" width="1" height="2" fill="#000"/><rect x="810" y="13" width="1" height="4" fill="#000"/><rect x="815" y="15" width="1" height="2" fill="#000"/><rect x="820" y="13" width="1" height="4" fill="#000"/><rect x="825" y="15" width="1" height="2" fill="#000"/><rect x="830" y="13" width="1" height="4" fill="#000"/><rect x="835" y="15" width="1" height="2" fill="#000"/><rect x="840" y="0" width="1" height="17" fill="#000"/><rect x="845" y="15" width="1" height="2" fill="#000"/><rect x="850" y="13" width="1" height="4" fill="#000"/><rect x="855" y="15" width="1" height="2" fill="#000"/><rect x="860" y="13" width="1" height="4" fill="#000"/><rect x="865" y="15" width="1" height="2" fill="#000"/><rect x="870" y="13" width="1" height="4" fill="#000"/><rect x="875" y="15" width="1" height="2" fill="#000"/><rect x="880" y="13" width="1" height="4" fill="#000"/><rect x="885" y="15" width="1" height="2" fill="#000"/><rect x="890" y="0" width="1" height="17" fill="#000"/><rect x="895" y="15" width="1" height="2" fill="#000"/><rect x="900" y="13" width="1" height="4" fill="#000"/><rect x="905" y="15" width="1" height="2" fill="#000"/><rect x="910" y="13" width="1" height="4" fill="#000"/><rect x="915" y="15" width="1" height="2" fill="#000"/><rect x="920" y="13" width="1" height="4" fill="#000"/><rect x="925" y="15" width="1" height="2" fill="#000"/><rect x="930" y="13" width="1" height="4" fill="#000"/><rect x="935" y="15" width="1" height="2" fill="#000"/><rect x="940" y="0" width="1" height="17" fill="#000"/><rect x="945" y="15" width="1" height="2" fill="#000"/><rect x="950" y="13" width="1" height="4" fill="#000"/><rect x="955" y="15" width="1" height="2" fill="#000"/><rect x="960" y="13" width="1" height="4" fill="#000"/><rect x="965" y="15" width="1" height="2" fill="#000"/><rect x="970" y="13" width="1" height="4" fill="#000"/><rect x="975" y="15" width="1" height="2" fill="#000"/><rect x="980" y="13" width="1" height="4" fill="#000"/><rect x="985" y="15" width="1" height="2" fill="#000"/><rect x="990" y="0" width="1" height="17" fill="#000"/><rect x="995" y="15" width="1" height="2" fill="#000"/><rect x="1000" y="13" width="1" height="4" fill="#000"/><rect x="1005" y="15" width="1" height="2" fill="#000"/><rect x="1010" y="13" width="1" height="4" fill="#000"/><rect x="1015" y="15" width="1" height="2" fill="#000"/><rect x="1020" y="13" width="1" height="4" fill="#000"/><rect x="1025" y="15" width="1" height="2" fill="#000"/><rect x="1030" y="13" width="1" height="4" fill="#000"/><rect x="1035" y="15" width="1" height="2" fill="#000"/><rect x="1040" y="0" width="1" height="17" fill="#000"/><rect x="1045" y="15" width="1" height="2" fill="#000"/><rect x="1050" y="13" width="1" height="4" fill="#000"/><rect x="1055" y="15" width="1" height="2" fill="#000"/><rect x="1060" y="13" width="1" height="4" fill="#000"/><rect x="1065" y="15" width="1" height="2" fill="#000"/><rect x="1070" y="13" width="1" height="4" fill="#000"/><rect x="1075" y="15" width="1" height="2" fill="#000"/><rect x="1080" y="13" width="1" height="4" fill="#000"/><rect x="1085" y="15" width="1" height="2" fill="#000"/><rect x="1090" y="0" width="1" height="17" fill="#000"/><rect x="1095" y="15" width="1" height="2" fill="#000"/><rect x="1100" y="13" width="1" height="4" fill="#000"/><rect x="1105" y="15" width="1" height="2" fill="#000"/><rect x="1110" y="13" width="1" height="4" fill="#000"/><rect x="1115" y="15" width="1" height="2" fill="#000"/><rect x="1120" y="13" width="1" height="4" fill="#000"/><rect x="1125" y="15" width="1" height="2" fill="#000"/><rect x="1130" y="13" width="1" height="4" fill="#000"/><rect x="1135" y="15" width="1" height="2" fill="#000"/><rect x="1140" y="0" width="1" height="17" fill="#000"/><rect x="1145" y="15" width="1" height="2" fill="#000"/><rect x="1150" y="13" width="1" height="4" fill="#000"/><rect x="1155" y="15" width="1" height="2" fill="#000"/><rect x="1160" y="13" width="1" height="4" fill="#000"/><rect x="1165" y="15" width="1" height="2" fill="#000"/><rect x="1170" y="13" width="1" height="4" fill="#000"/><rect x="1175" y="15" width="1" height="2" fill="#000"/><rect x="1180" y="13" width="1" height="4" fill="#000"/><rect x="1185" y="15" width="1" height="2" fill="#000"/><rect x="1190" y="0" width="1" height="17" fill="#000"/><rect x="1195" y="15" width="1" height="2" fill="#000"/><rect x="1200" y="13" width="1" height="4" fill="#000"/><rect x="1205" y="15" width="1" height="2" fill="#000"/><rect x="1210" y="13" width="1" height="4" fill="#000"/><rect x="1215" y="15" width="1" height="2" fill="#000"/><rect x="1220" y="13" width="1" height="4" fill="#000"/><rect x="1225" y="15" width="1" height="2" fill="#000"/><rect x="1230" y="13" width="1" height="4" fill="#000"/><rect x="1235" y="15" width="1" height="2" fill="#000"/><rect x="1240" y="0" width="1" height="17" fill="#000"/><rect x="1245" y="15" width="1" height="2" fill="#000"/><rect x="1250" y="13" width="1" height="4" fill="#000"/><rect x="1255" y="15" width="1" height="2" fill="#000"/><rect x="1260" y="13" width="1" height="4" fill="#000"/><rect x="1265" y="15" width="1" height="2" fill="#000"/><rect x="1270" y="13" width="1" height="4" fill="#000"/><rect x="1275" y="15" width="1" height="2" fill="#000"/><rect x="1280" y="13" width="1" height="4" fill="#000"/><rect x="1285" y="15" width="1" height="2" fill="#000"/><rect x="1290" y="0" width="1" height="17" fill="#000"/><rect x="1295" y="15" width="1" height="2" fill="#000"/><rect x="1300" y="13" width="1" height="4" fill="#000"/><rect x="1305" y="15" width="1" height="2" fill="#000"/><rect x="1310" y="13" width="1" height="4" fill="#000"/><rect x="1315" y="15" width="1" height="2" fill="#000"/><rect x="1320" y="13" width="1" height="4" fill="#000"/><rect x="1325" y="15" width="1" height="2" fill="#000"/><rect x="1330" y="13" width="1" height="4" fill="#000"/><rect x="1335" y="15" width="1" height="2" fill="#000"/><rect x="1340" y="0" width="1" height="17" fill="#000"/><rect x="1345" y="15" width="1" height="2" fill="#000"/></svg><div style="left:-109px;top:-227px;width:1500px;height:260px"><div style="left:100px;top:229px;font-size:11px;line-height:1;letter-spacing:-0.3px;color:#000">400</div><div style="left:150px;top:229px;font-size:11px;line-height:1;letter-spacing:-0.3px;color:#000">350</div><div style="left:200px;top:229px;font-size:11px;line-height:1;letter-spacing:-0.3px;color:#000">300</div><div style="left:250px;top:229px;font-size:11px;line-height:1;letter-spacing:-0.3px;color:#000">250</div><div style="left:300px;top:229px;font-size:11px;line-height:1;letter-spacing:-0.3px;color:#000">200</div><div style="left:350px;top:229px;font-size:11px;line-height:1;letter-spacing:-0.3px;color:#000">150</div><div style="left:400px;top:229px;font-size:11px;line-height:1;letter-spacing:-0.3px;color:#000">100</div><div style="left:450px;top:229px;font-size:11px;line-height:1;letter-spacing:-0.3px;color:#000">50</div><div style="left:500px;top:229px;font-size:11px;line-height:1;letter-spacing:-0.3px;color:#000">0</div><div style="left:550px;top:229px;font-size:11px;line-height:1;letter-spacing:-0.3px;color:#000">50</div><div style="left:600px;top:229px;font-size:11px;line-height:1;letter-spacing:-0.3px;color:#000">100</div><div style="left:650px;top:229px;font-size:11px;line-height:1;letter-spacing:-0.3px;color:#000">150</div><div style="left:700px;top:229px;font-size:11px;line-height:1;letter-spacing:-0.3px;color:#000">200</div><div style="left:750px;top:229px;font-size:11px;line-height:1;letter-spacing:-0.3px;color:#000">250</div><div style="left:800px;top:229px;font-size:11px;line-height:1;letter-spacing:-0.3px;color:#000">300</div><div style="left:850px;top:229px;font-size:11px;line-height:1;letter-spacing:-0.3px;color:#000">350</div><div style="left:900px;top:229px;font-size:11px;line-height:1;letter-spacing:-0.3px;color:#000">400</div><div style="left:950px;top:229px;font-size:11px;line-height:1;letter-spacing:-0.3px;color:#000">450</div><div style="left:1000px;top:229px;font-size:11px;line-height:1;letter-spacing:-0.3px;color:#000">500</div><div style="left:1050px;top:229px;font-size:11px;line-height:1;letter-spacing:-0.3px;color:#000">550</div><div style="left:1100px;top:229px;font-size:11px;line-height:1;letter-spacing:-0.3px;color:#000">600</div><div style="left:1150px;top:229px;font-size:11px;line-height:1;letter-spacing:-0.3px;color:#000">650</div><div style="left:1200px;top:229px;font-size:11px;line-height:1;letter-spacing:-0.3px;color:#000">700</div><div style="left:1250px;top:229px;font-size:11px;line-height:1;letter-spacing:-0.3px;color:#000">750</div><div style="left:1300px;top:229px;font-size:11px;line-height:1;letter-spacing:-0.3px;color:#000">800</div><div style="left:1350px;top:229px;font-size:11px;line-height:1;letter-spacing:-0.3px;color:#000">850</div><div style="left:1400px;top:229px;font-size:11px;line-height:1;letter-spacing:-0.3px;color:#000">900</div><div style="left:1450px;top:229px;font-size:11px;line-height:1;letter-spacing:-0.3px;color:#000">950</div></div></div><div style="left:91px;top:245px;width:18px;height:504px;overflow:hidden;background:#ece9d8;border-left:1px solid #fff"><svg style="left:-1px;top:0" width="18" height="504"><rect x="13" y="3" width="5" height="1" fill="#000"/><rect x="15" y="8" width="3" height="1" fill="#000"/><rect x="13" y="13" width="5" height="1" fill="#000"/><rect x="15" y="18" width="3" height="1" fill="#000"/><rect x="13" y="23" width="5" height="1" fill="#000"/><rect x="15" y="28" width="3" height="1" fill="#000"/><rect x="13" y="33" width="5" height="1" fill="#000"/><rect x="15" y="38" width="3" height="1" fill="#000"/><rect x="0" y="43" width="18" height="1" fill="#000"/><rect x="15" y="48" width="3" height="1" fill="#000"/><rect x="13" y="53" width="5" height="1" fill="#000"/><rect x="15" y="58" width="3" height="1" fill="#000"/><rect x="13" y="63" width="5" height="1" fill="#000"/><rect x="15" y="68" width="3" height="1" fill="#000"/><rect x="13" y="73" width="5" height="1" fill="#000"/><rect x="15" y="78" width="3" height="1" fill="#000"/><rect x="13" y="83" width="5" height="1" fill="#000"/><rect x="15" y="88" width="3" height="1" fill="#000"/><rect x="0" y="93" width="18" height="1" fill="#000"/><rect x="15" y="98" width="3" height="1" fill="#000"/><rect x="13" y="103" width="5" height="1" fill="#000"/><rect x="15" y="108" width="3" height="1" fill="#000"/><rect x="13" y="113" width="5" height="1" fill="#000"/><rect x="15" y="118" width="3" height="1" fill="#000"/><rect x="13" y="123" width="5" height="1" fill="#000"/><rect x="15" y="128" width="3" height="1" fill="#000"/><rect x="13" y="133" width="5" height="1" fill="#000"/><rect x="15" y="138" width="3" height="1" fill="#000"/><rect x="0" y="143" width="18" height="1" fill="#000"/><rect x="15" y="148" width="3" height="1" fill="#000"/><rect x="13" y="153" width="5" height="1" fill="#000"/><rect x="15" y="158" width="3" height="1" fill="#000"/><rect x="13" y="163" width="5" height="1" fill="#000"/><rect x="15" y="168" width="3" height="1" fill="#000"/><rect x="13" y="173" width="5" height="1" fill="#000"/><rect x="15" y="178" width="3" height="1" fill="#000"/><rect x="13" y="183" width="5" height="1" fill="#000"/><rect x="15" y="188" width="3" height="1" fill="#000"/><rect x="0" y="193" width="18" height="1" fill="#000"/><rect x="15" y="198" width="3" height="1" fill="#000"/><rect x="13" y="203" width="5" height="1" fill="#000"/><rect x="15" y="208" width="3" height="1" fill="#000"/><rect x="13" y="213" width="5" height="1" fill="#000"/><rect x="15" y="218" width="3" height="1" fill="#000"/><rect x="13" y="223" width="5" height="1" fill="#000"/><rect x="15" y="228" width="3" height="1" fill="#000"/><rect x="13" y="233" width="5" height="1" fill="#000"/><rect x="15" y="238" width="3" height="1" fill="#000"/><rect x="0" y="243" width="18" height="1" fill="#000"/><rect x="15" y="248" width="3" height="1" fill="#000"/><rect x="13" y="253" width="5" height="1" fill="#000"/><rect x="15" y="258" width="3" height="1" fill="#000"/><rect x="13" y="263" width="5" height="1" fill="#000"/><rect x="15" y="268" width="3" height="1" fill="#000"/><rect x="13" y="273" width="5" height="1" fill="#000"/><rect x="15" y="278" width="3" height="1" fill="#000"/><rect x="13" y="283" width="5" height="1" fill="#000"/><rect x="15" y="288" width="3" height="1" fill="#000"/><rect x="0" y="293" width="18" height="1" fill="#000"/><rect x="15" y="298" width="3" height="1" fill="#000"/><rect x="13" y="303" width="5" height="1" fill="#000"/><rect x="15" y="308" width="3" height="1" fill="#000"/><rect x="13" y="313" width="5" height="1" fill="#000"/><rect x="15" y="318" width="3" height="1" fill="#000"/><rect x="13" y="323" width="5" height="1" fill="#000"/><rect x="15" y="328" width="3" height="1" fill="#000"/><rect x="13" y="333" width="5" height="1" fill="#000"/><rect x="15" y="338" width="3" height="1" fill="#000"/><rect x="0" y="343" width="18" height="1" fill="#000"/><rect x="15" y="348" width="3" height="1" fill="#000"/><rect x="13" y="353" width="5" height="1" fill="#000"/><rect x="15" y="358" width="3" height="1" fill="#000"/><rect x="13" y="363" width="5" height="1" fill="#000"/><rect x="15" y="368" width="3" height="1" fill="#000"/><rect x="13" y="373" width="5" height="1" fill="#000"/><rect x="15" y="378" width="3" height="1" fill="#000"/><rect x="13" y="383" width="5" height="1" fill="#000"/><rect x="15" y="388" width="3" height="1" fill="#000"/><rect x="0" y="393" width="18" height="1" fill="#000"/><rect x="15" y="398" width="3" height="1" fill="#000"/><rect x="13" y="403" width="5" height="1" fill="#000"/><rect x="15" y="408" width="3" height="1" fill="#000"/><rect x="13" y="413" width="5" height="1" fill="#000"/><rect x="15" y="418" width="3" height="1" fill="#000"/><rect x="13" y="423" width="5" height="1" fill="#000"/><rect x="15" y="428" width="3" height="1" fill="#000"/><rect x="13" y="433" width="5" height="1" fill="#000"/><rect x="15" y="438" width="3" height="1" fill="#000"/><rect x="0" y="443" width="18" height="1" fill="#000"/><rect x="15" y="448" width="3" height="1" fill="#000"/><rect x="13" y="453" width="5" height="1" fill="#000"/><rect x="15" y="458" width="3" height="1" fill="#000"/><rect x="13" y="463" width="5" height="1" fill="#000"/><rect x="15" y="468" width="3" height="1" fill="#000"/><rect x="13" y="473" width="5" height="1" fill="#000"/><rect x="15" y="478" width="3" height="1" fill="#000"/><rect x="13" y="483" width="5" height="1" fill="#000"/><rect x="15" y="488" width="3" height="1" fill="#000"/><rect x="0" y="493" width="18" height="1" fill="#000"/><rect x="15" y="498" width="3" height="1" fill="#000"/></svg><div style="left:-91px;top:-245px;width:200px;height:800px"><div style="left:93px;top:287px;font-size:11px;line-height:1;letter-spacing:-0.3px;color:#000;transform-origin:0 0;transform:rotate(-90deg)">0</div><div style="left:93px;top:337px;font-size:11px;line-height:1;letter-spacing:-0.3px;color:#000;transform-origin:0 0;transform:rotate(-90deg)">50</div><div style="left:93px;top:387px;font-size:11px;line-height:1;letter-spacing:-0.3px;color:#000;transform-origin:0 0;transform:rotate(-90deg)">100</div><div style="left:93px;top:437px;font-size:11px;line-height:1;letter-spacing:-0.3px;color:#000;transform-origin:0 0;transform:rotate(-90deg)">150</div><div style="left:93px;top:487px;font-size:11px;line-height:1;letter-spacing:-0.3px;color:#000;transform-origin:0 0;transform:rotate(-90deg)">200</div><div style="left:93px;top:537px;font-size:11px;line-height:1;letter-spacing:-0.3px;color:#000;transform-origin:0 0;transform:rotate(-90deg)">250</div><div style="left:93px;top:587px;font-size:11px;line-height:1;letter-spacing:-0.3px;color:#000;transform-origin:0 0;transform:rotate(-90deg)">300</div><div style="left:93px;top:637px;font-size:11px;line-height:1;letter-spacing:-0.3px;color:#000;transform-origin:0 0;transform:rotate(-90deg)">350</div><div style="left:93px;top:687px;font-size:11px;line-height:1;letter-spacing:-0.3px;color:#000;transform-origin:0 0;transform:rotate(-90deg)">400</div><div style="left:93px;top:737px;font-size:11px;line-height:1;letter-spacing:-0.3px;color:#000;transform-origin:0 0;transform:rotate(-90deg)">450</div></div></div><div style="position:absolute;left:1440px;top:245px;width:17px;height:487px;background:linear-gradient(90deg,#f2f1ea,#fdfdfb)"></div><div style="position:absolute;left:1441px;top:246px;width:15px;height:15px;background:linear-gradient(135deg,#dce8ff,#b8cdfa);border:1px solid #b4c8f0;border-radius:2px"><svg style="position:absolute;left:0px;top:0px;" width="13" height="13" viewBox="0 0 13 13"><path d="M3.5 9 L7.5 5.5 L11.5 9" transform="translate(-0.5,-0.5)" fill="none" stroke="#4d6185" stroke-width="2"/></svg></div><div style="position:absolute;left:1441px;top:365px;width:15px;height:248px;background:linear-gradient(90deg,#cfdcfc,#c2d4fb 50%,#b6c9f5);border:1px solid #a9bff0;border-radius:2px;box-shadow:inset 1px 1px 0 #e8f0ff"></div><svg style="position:absolute;left:1445px;top:485px;" width="7" height="8" viewBox="0 0 7 8"><path d="M0 0.5 H7 M0 2.5 H7 M0 4.5 H7 M0 6.5 H7" stroke="#eef3ff" stroke-width="1"/><path d="M0 1.5 H7 M0 3.5 H7 M0 5.5 H7 M0 7.5 H7" stroke="#8fa8e0" stroke-width="1"/></svg><div style="position:absolute;left:1441px;top:716px;width:15px;height:15px;background:linear-gradient(135deg,#dce8ff,#b8cdfa);border:1px solid #b4c8f0;border-radius:2px"><svg style="position:absolute;left:0px;top:0px;" width="13" height="13" viewBox="0 0 13 13"><path d="M3.5 6 L7.5 9.5 L11.5 6" transform="translate(-0.5,-0.5)" fill="none" stroke="#4d6185" stroke-width="2"/></svg></div><div style="position:absolute;left:109px;top:732px;width:1331px;height:17px;background:linear-gradient(#eceae0,#f6f5f0 45%,#fefefc)"></div><div style="position:absolute;left:110px;top:733px;width:15px;height:15px;background:linear-gradient(135deg,#dce8ff,#b8cdfa);border:1px solid #b4c8f0;border-radius:2px"><svg style="position:absolute;left:0px;top:0px;" width="13" height="13" viewBox="0 0 13 13"><path d="M9 3.5 L5.5 7.5 L9 11.5" transform="translate(-0.5,-0.5)" fill="none" stroke="#4d6185" stroke-width="2"/></svg></div><div style="position:absolute;left:318px;top:733px;width:916px;height:15px;background:linear-gradient(#cfdcfc,#c2d4fb 50%,#b6c9f5);border:1px solid #a9bff0;border-radius:2px;box-shadow:inset 1px 1px 0 #e8f0ff"></div><svg style="position:absolute;left:771px;top:737px;" width="8" height="7" viewBox="0 0 8 7"><path d="M0.5 0 V7 M2.5 0 V7 M4.5 0 V7 M6.5 0 V7" stroke="#eef3ff" stroke-width="1"/><path d="M1.5 0 V7 M3.5 0 V7 M5.5 0 V7 M7.5 0 V7" stroke="#8fa8e0" stroke-width="1"/></svg><div style="position:absolute;left:1423px;top:733px;width:15px;height:15px;background:linear-gradient(135deg,#dce8ff,#b8cdfa);border:1px solid #b4c8f0;border-radius:2px"><svg style="position:absolute;left:0px;top:0px;" width="13" height="13" viewBox="0 0 13 13"><path d="M6 3.5 L9.5 7.5 L6 11.5" transform="translate(-0.5,-0.5)" fill="none" stroke="#4d6185" stroke-width="2"/></svg></div><div style="position:absolute;left:1440px;top:732px;width:17px;height:17px;background:#ece9d8"></div><div style="position:absolute;left:89px;top:751px;width:1370px;height:7px;background:#939393"></div><div class="grip" style="position:absolute;left:92px;top:753px;width:1365px;height:3px;"></div><div style="position:absolute;left:89px;top:758px;width:1370px;height:26px;background:linear-gradient(#6c6c6c,#5a5a5a 50%,#4a4a4a);border:1px solid #2e2e2e;box-shadow:inset 1px 1px 0 #7a7a7a"></div><div style="position:absolute;left:93px;top:766px;white-space:nowrap;line-height:1;font-family:'Liberation Mono',monospace;font-size:12px;transform:scaleX(0.8333);transform-origin:0 0;-webkit-text-stroke:0.25px currentColor;color:#fff">Actions - Frame [Layer1]</div><div style="position:absolute;left:1433px;top:761px;width:19px;height:19px;background:linear-gradient(#c83434,#a02020);border:1px solid #151515;border-radius:3px;box-shadow:inset 0 1px 0 rgba(255,255,255,0.18)"><svg style="position:absolute;left:2px;top:3px;" width="14" height="12" viewBox="0 0 14 12"><path d="M4 4.3 L10 8.7 M10 4.3 L4 8.7" stroke="#000" stroke-width="4.6" stroke-linecap="square"/><path d="M4 4.3 L10 8.7 M10 4.3 L4 8.7" stroke="#fff" stroke-width="2.6" stroke-linecap="square"/></svg></div><div style="position:absolute;left:89px;top:784px;width:1370px;height:67px;background:#ece9d8;border-top:1px solid #f4f2e6;border-left:1px solid #f4f2e6;border-right:1px solid #555;border-bottom:1px solid #555;box-shadow:inset 1px 1px 0 #555"></div><div style="position:absolute;left:151px;top:786px;width:1307px;height:47px;background:#fff"></div><div style="position:absolute;left:131px;top:786px;width:20px;height:47px;background:repeating-conic-gradient(#f0eee4 0 25%,#fbfaf6 0 50%) 0 0/2px 2px"></div><div style="position:absolute;left:104px;top:790px;white-space:nowrap;line-height:1;font-family:'Liberation Mono',monospace;font-size:12px;color:#111">1</div><div style="position:absolute;left:90px;top:833px;width:1368px;height:16px;background:linear-gradient(#eceae0,#f6f5f0 45%,#fefefc)"></div><div style="position:absolute;left:91px;top:834px;width:15px;height:15px;background:linear-gradient(135deg,#dce8ff,#b8cdfa);border:1px solid #b4c8f0;border-radius:2px"><svg style="position:absolute;left:0px;top:0px;" width="13" height="13" viewBox="0 0 13 13"><path d="M9 3.5 L5.5 7.5 L9 11.5" transform="translate(-0.5,-0.5)" fill="none" stroke="#4d6185" stroke-width="2"/></svg></div><div style="position:absolute;left:107px;top:834px;width:870px;height:15px;background:linear-gradient(#cfdcfc,#c2d4fb 50%,#b6c9f5);border:1px solid #a9bff0;border-radius:2px;box-shadow:inset 1px 1px 0 #e8f0ff"></div><svg style="position:absolute;left:538px;top:838px;" width="8" height="7" viewBox="0 0 8 7"><path d="M0.5 0 V7 M2.5 0 V7 M4.5 0 V7 M6.5 0 V7" stroke="#eef3ff" stroke-width="1"/><path d="M1.5 0 V7 M3.5 0 V7 M5.5 0 V7 M7.5 0 V7" stroke="#8fa8e0" stroke-width="1"/></svg><div style="position:absolute;left:1442px;top:835px;width:15px;height:15px;background:linear-gradient(135deg,#dce8ff,#b8cdfa);border:1px solid #b4c8f0;border-radius:2px"><svg style="position:absolute;left:0px;top:0px;" width="13" height="13" viewBox="0 0 13 13"><path d="M6 3.5 L9.5 7.5 L6 11.5" transform="translate(-0.5,-0.5)" fill="none" stroke="#4d6185" stroke-width="2"/></svg></div><svg style="position:absolute;left:1440px;top:833px;" width="18" height="17" viewBox="0 0 18 17"><path d="M17.5 1.5 L17.5 17 L2.5 17 Z" fill="#8e8e8e"/><path d="M16 5.5 V15.5 H6" fill="none" stroke="#444" stroke-width="1"/><path d="M13 9.5 V12.5 H9.5" fill="none" stroke="#444" stroke-width="1"/><path d="M14.5 7.5 V14 H8" fill="none" stroke="#b0b0b0" stroke-width="1"/><path d="M7.5 4.5 L11 8 L7.5 11.5" fill="none" stroke="#3d5078" stroke-width="2"/></svg><div style="position:absolute;left:89px;top:851px;width:1370px;height:6px;background:#939393"></div><div class="grip" style="position:absolute;left:92px;top:853px;width:1365px;height:3px;"></div><div style="position:absolute;left:89px;top:858px;width:678px;height:26px;background:linear-gradient(#6c6c6c,#5a5a5a 50%,#4a4a4a);border:1px solid #2e2e2e;box-shadow:inset 1px 1px 0 #7a7a7a"></div><div style="position:absolute;left:109px;top:863px;white-space:nowrap;line-height:1;font-size:12px;color:#000">Properties</div><div style="position:absolute;left:720px;top:861px;width:19px;height:19px;background:linear-gradient(#3a6478,#24495a);border:1px solid #151515;border-radius:3px;box-shadow:inset 0 1px 0 rgba(255,255,255,0.18)"><svg style="position:absolute;left:3px;top:2px;" width="12" height="14" viewBox="0 0 12 14"><path d="M6 10 V12.5" stroke="#000" stroke-width="3"/><path d="M6 9.5 V12" stroke="#fff" stroke-width="1.4"/><path d="M4.2 7.8 V5 Q4.2 2.8 6 2.8 Q7.8 2.8 7.8 5 V7.8 L9 9.2 H3 Z" fill="#000" stroke="#000" stroke-width="2.4"/><path d="M4.2 7.8 V5 Q4.2 2.8 6 2.8 Q7.8 2.8 7.8 5 V7.8 L9 9.2 H3 Z" fill="#000" stroke="#fff" stroke-width="1.1"/></svg></div><div style="position:absolute;left:741px;top:861px;width:19px;height:19px;background:linear-gradient(#c83434,#a02020);border:1px solid #151515;border-radius:3px;box-shadow:inset 0 1px 0 rgba(255,255,255,0.18)"><svg style="position:absolute;left:2px;top:3px;" width="14" height="12" viewBox="0 0 14 12"><path d="M4 4.3 L10 8.7 M10 4.3 L4 8.7" stroke="#000" stroke-width="4.6" stroke-linecap="square"/><path d="M4 4.3 L10 8.7 M10 4.3 L4 8.7" stroke="#fff" stroke-width="2.6" stroke-linecap="square"/></svg></div><div style="position:absolute;left:767px;top:858px;width:7px;height:143px;background:#939393"></div><div class="gripv" style="position:absolute;left:769px;top:860px;width:3px;height:139px;"></div><div style="position:absolute;left:774px;top:858px;width:685px;height:26px;background:linear-gradient(#6c6c6c,#5a5a5a 50%,#4a4a4a);border:1px solid #2e2e2e;box-shadow:inset 1px 1px 0 #7a7a7a"></div><div style="position:absolute;left:795px;top:863px;white-space:nowrap;line-height:1;font-size:12px;color:#000">Transform</div><div style="position:absolute;left:1412px;top:861px;width:19px;height:19px;background:linear-gradient(#3a6478,#24495a);border:1px solid #151515;border-radius:3px;box-shadow:inset 0 1px 0 rgba(255,255,255,0.18)"><svg style="position:absolute;left:3px;top:2px;" width="12" height="14" viewBox="0 0 12 14"><path d="M6 10 V12.5" stroke="#000" stroke-width="3"/><path d="M6 9.5 V12" stroke="#fff" stroke-width="1.4"/><path d="M4.2 7.8 V5 Q4.2 2.8 6 2.8 Q7.8 2.8 7.8 5 V7.8 L9 9.2 H3 Z" fill="#000" stroke="#000" stroke-width="2.4"/><path d="M4.2 7.8 V5 Q4.2 2.8 6 2.8 Q7.8 2.8 7.8 5 V7.8 L9 9.2 H3 Z" fill="#000" stroke="#fff" stroke-width="1.1"/></svg></div><div style="position:absolute;left:1433px;top:861px;width:19px;height:19px;background:linear-gradient(#c83434,#a02020);border:1px solid #151515;border-radius:3px;box-shadow:inset 0 1px 0 rgba(255,255,255,0.18)"><svg style="position:absolute;left:2px;top:3px;" width="14" height="12" viewBox="0 0 14 12"><path d="M4 4.3 L10 8.7 M10 4.3 L4 8.7" stroke="#000" stroke-width="4.6" stroke-linecap="square"/><path d="M4 4.3 L10 8.7 M10 4.3 L4 8.7" stroke="#fff" stroke-width="2.6" stroke-linecap="square"/></svg></div><div style="position:absolute;left:89px;top:884px;width:678px;height:92px;background:#8e8e8e;border-left:1px solid #6a6a6a;border-top:1px solid #a0a0a0"></div><div style="position:absolute;left:774px;top:884px;width:685px;height:92px;background:#8e8e8e;border-left:1px solid #6a6a6a;border-top:1px solid #a0a0a0"></div><div style="position:absolute;left:90px;top:892px;width:138px;height:90px;border:1px solid #aaa58c;border-radius:6px;border-bottom:none"></div><div style="position:absolute;left:125px;top:900px;white-space:nowrap;line-height:1;font-size:11px;color:#f0f0f0">Frame</div><div style="position:absolute;left:95px;top:919px;white-space:nowrap;line-height:1;font-size:11px;letter-spacing:-0.3px;color:#f0f0f0">Name</div><div style="position:absolute;left:126px;top:914px;width:96px;height:23px;background:#fff;border:1px solid #404040;border-radius:2px"></div><div style="position:absolute;left:239px;top:886px;width:2px;height:87px;background:#f0f0f0"></div><div style="position:absolute;left:289px;top:898px;white-space:nowrap;line-height:1;font-size:11px;color:#f0f0f0">Sound</div><div style="position:absolute;left:358px;top:893px;width:112px;height:21px;background:#fff;border:1px solid #404040;border-radius:3px"></div><div style="position:absolute;left:361px;top:898px;white-space:nowrap;line-height:1;font-size:11px;color:#000">No sound</div><div style="position:absolute;left:454px;top:894px;width:15px;height:19px;background:linear-gradient(#cacaca,#a8a8a8);border-left:1px solid #888"></div><svg style="position:absolute;left:457px;top:900px;" width="9" height="7" viewBox="0 0 9 7"><path d="M1 1 L4.5 5 L8 1" fill="none" stroke="#111" stroke-width="2"/></svg><div style="position:absolute;left:357px;top:930px;white-space:nowrap;line-height:1;font-size:11px;letter-spacing:-0.2px;color:#f0f0f0">No sound selected</div><div style="position:absolute;left:290px;top:951px;width:67px;height:22px;background:linear-gradient(#9c9c9c,#8a8a8a);border:1px solid #6a6a6a;border-radius:3px"></div><div style="position:absolute;left:290px;top:956px;white-space:nowrap;line-height:1;width:67px;text-align:center;font-size:11px;color:#e0e0e0">Easing...</div><div style="position:absolute;left:89px;top:975px;width:678px;height:26px;background:#7a7a7a;border-top:4px solid #b4b4b4;border-bottom:1px solid #505050;box-shadow:inset 0 1px 0 #5a5a5a"></div><div style="position:absolute;left:774px;top:975px;width:685px;height:26px;background:#7a7a7a;border-top:4px solid #b4b4b4;border-bottom:1px solid #505050;box-shadow:inset 0 1px 0 #5a5a5a"></div><div style="position:absolute;left:94px;top:979px;width:65px;height:19px;background:#a8a8a8;border:1px solid #c8c8c8;border-top:none"></div><div style="position:absolute;left:97px;top:984px;white-space:nowrap;line-height:1;font-family:'Liberation Mono',monospace;font-weight:bold;font-size:12px;transform:scaleX(0.8333);transform-origin:0 0;color:#000">Properties</div><div style="position:absolute;left:160px;top:980px;width:49px;height:18px;background:#7e7e7e;border:1px solid #5e5e5e"></div><div style="position:absolute;left:163px;top:984px;white-space:nowrap;line-height:1;font-family:'Liberation Mono',monospace;font-weight:bold;font-size:12px;transform:scaleX(0.8333);transform-origin:0 0;color:#fff">Filters</div><div style="position:absolute;left:779px;top:979px;width:59px;height:19px;background:#a8a8a8;border:1px solid #c8c8c8;border-top:none"></div><div style="position:absolute;left:782px;top:984px;white-space:nowrap;line-height:1;font-family:'Liberation Mono',monospace;font-weight:bold;font-size:12px;transform:scaleX(0.8333);transform-origin:0 0;color:#000">Transform</div><div style="position:absolute;left:839px;top:980px;width:127px;height:18px;background:#7e7e7e;border:1px solid #5e5e5e"></div><div style="position:absolute;left:843px;top:984px;white-space:nowrap;line-height:1;font-family:'Liberation Mono',monospace;font-weight:bold;font-size:12px;transform:scaleX(0.8333);transform-origin:0 0;color:#fff">Color Transformation</div><div style="position:absolute;left:0px;top:1001px;width:1679px;height:18px;background:#8f8f8f;border-top:1px solid #4a4a4a;box-shadow:inset 0 1px 0 #b4b4b4"></div><div style="position:absolute;left:3px;top:1006px;white-space:nowrap;line-height:1;font-size:12px;letter-spacing:-0.3px;color:#fff">Ready</div><div style="position:absolute;left:1596px;top:1003px;width:2px;height:16px;border-left:1px solid #b0b0b0;border-right:1px solid #505050"></div><div style="position:absolute;left:1622px;top:1003px;width:2px;height:16px;border-left:1px solid #b0b0b0;border-right:1px solid #505050"></div><div style="position:absolute;left:1648px;top:1003px;width:2px;height:16px;border-left:1px solid #b0b0b0;border-right:1px solid #505050"></div><div style="left:1627px;top:1005px;width:22px;height:14px;overflow:hidden"><div style="left:0;top:1px;font-size:12px;line-height:1;color:#fff">NUM</div></div><div style="position:absolute;left:1459px;top:84px;width:220px;height:917px;background:#939393"></div><div class="gripv" style="position:absolute;left:1461px;top:88px;width:4px;height:910px;"></div><div style="position:absolute;left:1466px;top:84px;width:213px;height:578px;background:#8f8f8f;border-left:1px solid #6a6a6a;border-bottom:1px solid #6a6a6a"></div><div style="position:absolute;left:1466px;top:84px;width:213px;height:26px;background:linear-gradient(#6c6c6c,#5a5a5a 50%,#4a4a4a);border:1px solid #2e2e2e;box-shadow:inset 1px 1px 0 #7a7a7a"></div><div style="position:absolute;left:1469px;top:92px;white-space:nowrap;line-height:1;font-family:'Liberation Mono',monospace;font-size:12px;transform:scaleX(0.8333);transform-origin:0 0;-webkit-text-stroke:0.25px currentColor;color:#fff">Shape</div><div style="position:absolute;left:1612px;top:87px;width:19px;height:19px;background:linear-gradient(#505050,#383838);border:1px solid #151515;border-radius:3px;box-shadow:inset 0 1px 0 rgba(255,255,255,0.18)"><svg style="position:absolute;left:2px;top:3px;" width="14" height="12" viewBox="0 0 14 12"><path d="M4 4.3 L10 8.7 M10 4.3 L4 8.7" stroke="#000" stroke-width="4.6" stroke-linecap="square"/><path d="M4 4.3 L10 8.7 M10 4.3 L4 8.7" stroke="#fff" stroke-width="2.6" stroke-linecap="square"/></svg></div><div style="position:absolute;left:1633px;top:87px;width:19px;height:19px;background:linear-gradient(#3a6478,#24495a);border:1px solid #151515;border-radius:3px;box-shadow:inset 0 1px 0 rgba(255,255,255,0.18)"><svg style="position:absolute;left:3px;top:2px;" width="12" height="14" viewBox="0 0 12 14"><path d="M6 10 V12.5" stroke="#000" stroke-width="3"/><path d="M6 9.5 V12" stroke="#fff" stroke-width="1.4"/><path d="M4.2 7.8 V5 Q4.2 2.8 6 2.8 Q7.8 2.8 7.8 5 V7.8 L9 9.2 H3 Z" fill="#000" stroke="#000" stroke-width="2.4"/><path d="M4.2 7.8 V5 Q4.2 2.8 6 2.8 Q7.8 2.8 7.8 5 V7.8 L9 9.2 H3 Z" fill="#000" stroke="#fff" stroke-width="1.1"/></svg></div><div style="position:absolute;left:1654px;top:87px;width:19px;height:19px;background:linear-gradient(#c83434,#a02020);border:1px solid #151515;border-radius:3px;box-shadow:inset 0 1px 0 rgba(255,255,255,0.18)"><svg style="position:absolute;left:2px;top:3px;" width="14" height="12" viewBox="0 0 14 12"><path d="M4 4.3 L10 8.7 M10 4.3 L4 8.7" stroke="#000" stroke-width="4.6" stroke-linecap="square"/><path d="M4 4.3 L10 8.7 M10 4.3 L4 8.7" stroke="#fff" stroke-width="2.6" stroke-linecap="square"/></svg></div><div style="position:absolute;left:1469px;top:122px;white-space:nowrap;line-height:1;font-size:11px;color:#f0f0f0">Pen</div><div style="position:absolute;left:1503px;top:115px;width:35px;height:20px;background:#fff;border:1px solid #404040;border-radius:2px"><div style="position:absolute;left:2px;top:3px;white-space:nowrap;line-height:1;font-size:11px;color:#000">1</div></div><div style="position:absolute;left:1542px;top:115px;width:69px;height:21px;background:#fff;border:1px solid #404040;border-radius:3px"><div style="position:absolute;left:3px;top:5px;white-space:nowrap;line-height:1;font-size:11px;color:#000">Solid</div><div style="position:absolute;left:52px;top:0px;width:15px;height:19px;background:linear-gradient(#cacaca,#a8a8a8);border-left:1px solid #888"><svg style="position:absolute;left:3px;top:6px;" width="9" height="7" viewBox="0 0 9 7"><path d="M1 1 L4.5 5 L8 1" fill="none" stroke="#111" stroke-width="2"/></svg></div></div><div style="position:absolute;left:1622px;top:115px;width:57px;height:20px;background:#000"></div><div style="position:absolute;left:1474px;top:144px;width:117px;height:74px;background:linear-gradient(rgba(128,128,128,0) 0%,rgba(128,128,128,1) 100%),linear-gradient(90deg,#f00 0%,#ff0 17%,#0f0 33%,#0ff 50%,#00f 67%,#f0f 83%,#f00 100%)"></div><div style="position:absolute;left:1474px;top:222px;width:117px;height:20px;background:linear-gradient(90deg,#000,#fff)"></div><div style="position:absolute;left:1471px;top:221px;width:7px;height:22px;border:1px solid #000;background:#222;box-shadow:inset 0 0 0 1px #fff,inset 0 0 0 2px #000"></div><div style="position:absolute;left:1471px;top:213px;width:7px;height:7px;border:1px solid #000;background:#888;box-shadow:inset 0 0 0 1px #fff"></div><div style="position:absolute;left:1610px;top:146px;white-space:nowrap;line-height:1;font-size:11px;color:#f0f0f0">R</div><div style="position:absolute;left:1623px;top:140px;width:39px;height:23px;background:#fff;border:1px solid #404040;border-radius:2px"><div style="position:absolute;left:2px;top:5px;white-space:nowrap;line-height:1;font-size:11px;color:#000">0</div></div><div style="position:absolute;left:1662px;top:140px;width:12px;height:22px;background:#ece9d8"><svg style="position:absolute;left:3px;top:9px;" width="6" height="4" viewBox="0 0 6 4"><path d="M0 0 H6 L3 3.5 Z" fill="#111"/></svg></div><div style="position:absolute;left:1610px;top:172px;white-space:nowrap;line-height:1;font-size:11px;color:#f0f0f0">G</div><div style="position:absolute;left:1623px;top:166px;width:39px;height:23px;background:#fff;border:1px solid #404040;border-radius:2px"><div style="position:absolute;left:2px;top:5px;white-space:nowrap;line-height:1;font-size:11px;color:#000">0</div></div><div style="position:absolute;left:1662px;top:166px;width:12px;height:22px;background:#ece9d8"><svg style="position:absolute;left:3px;top:9px;" width="6" height="4" viewBox="0 0 6 4"><path d="M0 0 H6 L3 3.5 Z" fill="#111"/></svg></div><div style="position:absolute;left:1610px;top:198px;white-space:nowrap;line-height:1;font-size:11px;color:#f0f0f0">B</div><div style="position:absolute;left:1623px;top:192px;width:39px;height:23px;background:#fff;border:1px solid #404040;border-radius:2px"><div style="position:absolute;left:2px;top:5px;white-space:nowrap;line-height:1;font-size:11px;color:#000">0</div></div><div style="position:absolute;left:1662px;top:192px;width:12px;height:22px;background:#ece9d8"><svg style="position:absolute;left:3px;top:9px;" width="6" height="4" viewBox="0 0 6 4"><path d="M0 0 H6 L3 3.5 Z" fill="#111"/></svg></div><div style="position:absolute;left:1610px;top:224px;white-space:nowrap;line-height:1;font-size:11px;color:#f0f0f0">A</div><div style="position:absolute;left:1623px;top:218px;width:39px;height:23px;background:#fff;border:1px solid #404040;border-radius:2px"><div style="position:absolute;left:2px;top:5px;white-space:nowrap;line-height:1;font-size:11px;color:#000">255</div></div><div style="position:absolute;left:1662px;top:218px;width:12px;height:22px;background:#ece9d8"><svg style="position:absolute;left:3px;top:9px;" width="6" height="4" viewBox="0 0 6 4"><path d="M0 0 H6 L3 3.5 Z" fill="#111"/></svg></div><div style="position:absolute;left:1581px;top:247px;width:93px;height:22px;background:#fff;border:1px solid #404040;border-radius:2px"><div style="position:absolute;left:2px;top:4px;white-space:nowrap;line-height:1;font-size:11px;color:#000">#000000</div></div><div style="position:absolute;left:1469px;top:284px;white-space:nowrap;line-height:1;font-size:11px;color:#f0f0f0">Brush</div><div style="position:absolute;left:1503px;top:279px;width:108px;height:20px;background:#fff;border:1px solid #404040;border-radius:3px"><div style="position:absolute;left:3px;top:5px;white-space:nowrap;line-height:1;font-size:11px;color:#000">Solid</div><div style="position:absolute;left:91px;top:0px;width:15px;height:18px;background:linear-gradient(#cacaca,#a8a8a8);border-left:1px solid #888"><svg style="position:absolute;left:3px;top:6px;" width="9" height="7" viewBox="0 0 9 7"><path d="M1 1 L4.5 5 L8 1" fill="none" stroke="#111" stroke-width="2"/></svg></div></div><div style="position:absolute;left:1622px;top:278px;width:57px;height:21px;background:#6495ed"></div><div style="position:absolute;left:1474px;top:345px;width:117px;height:74px;background:linear-gradient(rgba(128,128,128,0) 0%,rgba(128,128,128,1) 100%),linear-gradient(90deg,#f00 0%,#ff0 17%,#0f0 33%,#0ff 50%,#00f 67%,#f0f 83%,#f00 100%)"></div><div style="position:absolute;left:1474px;top:422px;width:117px;height:21px;background:linear-gradient(90deg,#000 0%,#1d57e0 60%,#fff 100%)"></div><div style="position:absolute;left:1541px;top:356px;width:8px;height:8px;border:1px solid #000;background:#3070e0;box-shadow:inset 0 0 0 1px #fff"></div><div style="position:absolute;left:1547px;top:422px;width:8px;height:21px;border:1px solid #000;background:#5a86e0;box-shadow:inset 0 0 0 1px #fff"></div><div style="position:absolute;left:1610px;top:347px;white-space:nowrap;line-height:1;font-size:11px;color:#f0f0f0">R</div><div style="position:absolute;left:1623px;top:341px;width:39px;height:23px;background:#fff;border:1px solid #404040;border-radius:2px"><div style="position:absolute;left:2px;top:5px;white-space:nowrap;line-height:1;font-size:11px;color:#000">100</div></div><div style="position:absolute;left:1662px;top:341px;width:12px;height:22px;background:#ece9d8"><svg style="position:absolute;left:3px;top:9px;" width="6" height="4" viewBox="0 0 6 4"><path d="M0 0 H6 L3 3.5 Z" fill="#111"/></svg></div><div style="position:absolute;left:1610px;top:373px;white-space:nowrap;line-height:1;font-size:11px;color:#f0f0f0">G</div><div style="position:absolute;left:1623px;top:367px;width:39px;height:23px;background:#fff;border:1px solid #404040;border-radius:2px"><div style="position:absolute;left:2px;top:5px;white-space:nowrap;line-height:1;font-size:11px;color:#000">149</div></div><div style="position:absolute;left:1662px;top:367px;width:12px;height:22px;background:#ece9d8"><svg style="position:absolute;left:3px;top:9px;" width="6" height="4" viewBox="0 0 6 4"><path d="M0 0 H6 L3 3.5 Z" fill="#111"/></svg></div><div style="position:absolute;left:1610px;top:399px;white-space:nowrap;line-height:1;font-size:11px;color:#f0f0f0">B</div><div style="position:absolute;left:1623px;top:393px;width:39px;height:23px;background:#fff;border:1px solid #404040;border-radius:2px"><div style="position:absolute;left:2px;top:5px;white-space:nowrap;line-height:1;font-size:11px;color:#000">237</div></div><div style="position:absolute;left:1662px;top:393px;width:12px;height:22px;background:#ece9d8"><svg style="position:absolute;left:3px;top:9px;" width="6" height="4" viewBox="0 0 6 4"><path d="M0 0 H6 L3 3.5 Z" fill="#111"/></svg></div><div style="position:absolute;left:1610px;top:425px;white-space:nowrap;line-height:1;font-size:11px;color:#f0f0f0">A</div><div style="position:absolute;left:1623px;top:419px;width:39px;height:23px;background:#fff;border:1px solid #404040;border-radius:2px"><div style="position:absolute;left:2px;top:5px;white-space:nowrap;line-height:1;font-size:11px;color:#000">255</div></div><div style="position:absolute;left:1662px;top:419px;width:12px;height:22px;background:#ece9d8"><svg style="position:absolute;left:3px;top:9px;" width="6" height="4" viewBox="0 0 6 4"><path d="M0 0 H6 L3 3.5 Z" fill="#111"/></svg></div><div style="position:absolute;left:1581px;top:447px;width:93px;height:23px;background:#fff;border:1px solid #404040;border-radius:2px"><div style="position:absolute;left:2px;top:5px;white-space:nowrap;line-height:1;font-size:11px;color:#000">#6495ED</div></div><div style="position:absolute;left:1469px;top:485px;white-space:nowrap;line-height:1;font-size:11px;letter-spacing:-0.4px;color:#f0f0f0">Color Picker</div><div style="position:absolute;left:1527px;top:479px;width:147px;height:21px;background:#fff;border:1px solid #404040;border-radius:3px"><svg style="left:0;top:0" width="128" height="19" viewBox="0 0 128 19"><g fill="none" stroke="#000" stroke-width="1" stroke-linecap="square"><path transform="translate(2,4)" d="M4.5 0 L1.5 4 M3 1.5 H9 L7 3.5 M2.5 4.5 H10.5 V7.5 H2.5 Z M6.5 4.5 V7.5 M2.5 7.5 V10.5 H11 V8.5"/><path transform="translate(14,4)" d="M1.5 0.5 L3 2 M0.5 4.5 H3.5 V10 L2 11.5 M5.5 1 V11 M5.5 0.5 H11.5 V11 H9.5 M7 2.5 H10 M8.5 1.5 V4.5 M6.5 4.5 H10.5 M7.5 6.5 H9.5 V9 H7.5 Z"/><path transform="translate(26,4)" d="M2.5 9 V10 L1.5 11.5"/><path transform="translate(31,4)" d="M2 0.5 L0.5 3 M1.5 2.5 H4 L2.5 4.5 M1.5 4 V10.5 L3 9 M6 0.5 L5 2.5 M5.5 2 H11 V9 L10 10 M6.5 4 H9 V6.5 H6.5 M6.5 4 V10.5 H11.5 V9.5"/><path transform="translate(43,4)" d="M1 1.5 L5 0.5 M0.5 4.5 H6 M3.5 1 V11.5 M3.5 5 L0.5 9 M3.5 5.5 L6 8 M7.5 2.5 H11.5 V10.5 H7.5 Z"/><path transform="translate(55,4)" d="M6 0 V1.5 M1.5 1.5 H11.5 M1.5 1.5 V7 L0.5 11 M3 3.5 H11 M5 2 V6.5 M9 2 V6.5 M5 6.5 H9 M3.5 8 H10 L4 11.5 M5 8.5 L11 11.5"/><path transform="translate(67,4)" d="M1 1.5 L5 0.5 M0.5 4.5 H6 M3.5 1 V11.5 M3.5 5 L0.5 9 M3.5 5.5 L6 8 M7.5 2.5 H11.5 V10.5 H7.5 Z"/><path transform="translate(79,4)" d="M6 0 V1.5 M0.5 1.5 H11.5 M3.5 3 H8.5 V5.5 H3.5 Z M0.5 6.5 V8 M0.5 6.5 H11.5 V8 M5 8 V10 L3 11.5 M7.5 8 V11 H11.5 V10"/><path transform="translate(91,4)" d="M6 0 V1.5 M1.5 1.5 H11.5 M1.5 1.5 V7 L0.5 11 M3 3.5 H11 M5 2 V6.5 M9 2 V6.5 M5 6.5 H9 M3.5 8 H10 L4 11.5 M5 8.5 L11 11.5"/><path transform="translate(103,4)" d="M4 6.5 H7"/><path transform="translate(113,4)" d="M1 1 L2 2 M0.5 4 L1.5 5 M0.5 10.5 L2.5 7 M4.5 0.5 H10.5 V5.5 H4.5 Z M4.5 3 H10.5 M4.5 6.5 V11 H7 M4.5 8.5 H6.5 M8.5 6 V10.5 H11.5 V9.5 M8.5 8 L11 7"/><rect x="127" y="9" width="1" height="1"/></g><rect x="127.5" y="9" width="0.8" height="1" fill="#000"/></svg><div style="position:absolute;left:129px;top:0px;width:16px;height:19px;background:linear-gradient(#cacaca,#a8a8a8);border-left:1px solid #888"><svg style="position:absolute;left:3px;top:6px;" width="9" height="7" viewBox="0 0 9 7"><path d="M1 1 L4.5 5 L8 1" fill="none" stroke="#111" stroke-width="2"/></svg></div></div><div style="position:absolute;left:1466px;top:662px;width:213px;height:7px;background:#939393"></div><div class="grip" style="position:absolute;left:1468px;top:664px;width:209px;height:3px;"></div><div style="position:absolute;left:1466px;top:669px;width:213px;height:192px;background:#8f8f8f;border-left:1px solid #6a6a6a"></div><div style="position:absolute;left:1466px;top:669px;width:213px;height:26px;background:linear-gradient(#6c6c6c,#5a5a5a 50%,#4a4a4a);border:1px solid #2e2e2e;box-shadow:inset 1px 1px 0 #7a7a7a"></div><div style="position:absolute;left:1469px;top:677px;white-space:nowrap;line-height:1;font-family:'Liberation Mono',monospace;font-size:12px;transform:scaleX(0.8333);transform-origin:0 0;-webkit-text-stroke:0.25px currentColor;color:#fff">Movie Browser</div><div style="position:absolute;left:1612px;top:672px;width:19px;height:19px;background:linear-gradient(#3a6478,#24495a);border:1px solid #151515;border-radius:3px;box-shadow:inset 0 1px 0 rgba(255,255,255,0.18)"><svg style="position:absolute;left:2px;top:3px;" width="14" height="12" viewBox="0 0 14 12"><path d="M4 4.3 L10 8.7 M10 4.3 L4 8.7" stroke="#000" stroke-width="4.6" stroke-linecap="square"/><path d="M4 4.3 L10 8.7 M10 4.3 L4 8.7" stroke="#fff" stroke-width="2.6" stroke-linecap="square"/></svg></div><div style="position:absolute;left:1633px;top:672px;width:19px;height:19px;background:linear-gradient(#3a6478,#24495a);border:1px solid #151515;border-radius:3px;box-shadow:inset 0 1px 0 rgba(255,255,255,0.18)"><svg style="position:absolute;left:3px;top:2px;" width="12" height="14" viewBox="0 0 12 14"><path d="M6 10 V12.5" stroke="#000" stroke-width="3"/><path d="M6 9.5 V12" stroke="#fff" stroke-width="1.4"/><path d="M4.2 7.8 V5 Q4.2 2.8 6 2.8 Q7.8 2.8 7.8 5 V7.8 L9 9.2 H3 Z" fill="#000" stroke="#000" stroke-width="2.4"/><path d="M4.2 7.8 V5 Q4.2 2.8 6 2.8 Q7.8 2.8 7.8 5 V7.8 L9 9.2 H3 Z" fill="#000" stroke="#fff" stroke-width="1.1"/></svg></div><div style="position:absolute;left:1654px;top:672px;width:19px;height:19px;background:linear-gradient(#c83434,#a02020);border:1px solid #151515;border-radius:3px;box-shadow:inset 0 1px 0 rgba(255,255,255,0.18)"><svg style="position:absolute;left:2px;top:3px;" width="14" height="12" viewBox="0 0 14 12"><path d="M4 4.3 L10 8.7 M10 4.3 L4 8.7" stroke="#000" stroke-width="4.6" stroke-linecap="square"/><path d="M4 4.3 L10 8.7 M10 4.3 L4 8.7" stroke="#fff" stroke-width="2.6" stroke-linecap="square"/></svg></div><svg style="left:0;top:0" width="1679" height="1019" viewBox="0 0 1679 1019"><path d="M1486.5 705.5 L1495.5 714.5 M1495.5 705.5 L1486.5 714.5" stroke="#5a6a7a" stroke-width="3.6" stroke-linecap="square"/><rect x="1513.9" y="703.9" width="5.2" height="4.9" fill="#a4b0bc" stroke="#5c6c7c" stroke-width="1.1"/><rect x="1521.8" y="710.8" width="5.4" height="5.4" fill="#a4b0bc" stroke="#5c6c7c" stroke-width="1.1"/><rect x="1516.7" y="705.8" width="7.6" height="7.3" fill="#b4bcc6" stroke="#7a8a9a" stroke-width="1.1"/><rect x="1542.8" y="703.9" width="5.3" height="4.9" fill="#a4b0bc" stroke="#5c6c7c" stroke-width="1.1"/><rect x="1545.8" y="705.8" width="7.6" height="7.3" fill="#b4bcc6" stroke="#6a7a8a" stroke-width="1.1"/><rect x="1574.4" y="705.8" width="8.1" height="7.3" fill="#bcc2c8" stroke="#7a8a9a" stroke-width="1.1"/><rect x="1572.7" y="710.9" width="5.5" height="5.3" fill="#a4b0bc" stroke="#5c6c7c" stroke-width="1.1"/><rect x="1602.5" y="706.2" width="7.6" height="6.9" fill="#c4c8cc" stroke="#8a9aa8" stroke-width="1.1"/><rect x="1607.8" y="702.6" width="5.5" height="5.2" fill="#a4b0bc" stroke="#5c6c7c" stroke-width="1.1"/><rect x="1600.6" y="710.9" width="5.7" height="5.3" fill="#a4b0bc" stroke="#5c6c7c" stroke-width="1.1"/></svg><div style="position:absolute;left:1467px;top:723px;width:208px;height:138px;background:#fff"></div><svg style="position:absolute;left:1480px;top:730px;" width="9" height="2" viewBox="0 0 9 2"><path d="M0 1 H9" stroke="#999" stroke-dasharray="1 1"/></svg><div style="position:absolute;left:1490px;top:726px;white-space:nowrap;line-height:1;font-size:11px;color:#000">Layer1</div><div style="position:absolute;left:1466px;top:861px;width:213px;height:5px;background:#8f8f8f;border-left:1px solid #6a6a6a;border-bottom:1px solid #6a6a6a"></div><div style="position:absolute;left:1466px;top:866px;width:213px;height:7px;background:#939393"></div><div class="grip" style="position:absolute;left:1468px;top:867px;width:209px;height:3px;"></div><div style="position:absolute;left:1466px;top:873px;width:213px;height:128px;background:#8f8f8f;border-left:1px solid #6a6a6a"></div><div style="position:absolute;left:1466px;top:873px;width:213px;height:26px;background:linear-gradient(#6c6c6c,#5a5a5a 50%,#4a4a4a);border:1px solid #2e2e2e;box-shadow:inset 1px 1px 0 #7a7a7a"></div><div style="position:absolute;left:1469px;top:881px;white-space:nowrap;line-height:1;font-family:'Liberation Mono',monospace;font-size:12px;transform:scaleX(0.8333);transform-origin:0 0;-webkit-text-stroke:0.25px currentColor;color:#fff">Library</div><div style="position:absolute;left:1612px;top:876px;width:19px;height:19px;background:linear-gradient(#3a6478,#24495a);border:1px solid #151515;border-radius:3px;box-shadow:inset 0 1px 0 rgba(255,255,255,0.18)"><svg style="position:absolute;left:2px;top:3px;" width="14" height="12" viewBox="0 0 14 12"><path d="M4 4.3 L10 8.7 M10 4.3 L4 8.7" stroke="#000" stroke-width="4.6" stroke-linecap="square"/><path d="M4 4.3 L10 8.7 M10 4.3 L4 8.7" stroke="#fff" stroke-width="2.6" stroke-linecap="square"/></svg></div><div style="position:absolute;left:1633px;top:876px;width:19px;height:19px;background:linear-gradient(#3a6478,#24495a);border:1px solid #151515;border-radius:3px;box-shadow:inset 0 1px 0 rgba(255,255,255,0.18)"><svg style="position:absolute;left:3px;top:2px;" width="12" height="14" viewBox="0 0 12 14"><path d="M6 10 V12.5" stroke="#000" stroke-width="3"/><path d="M6 9.5 V12" stroke="#fff" stroke-width="1.4"/><path d="M4.2 7.8 V5 Q4.2 2.8 6 2.8 Q7.8 2.8 7.8 5 V7.8 L9 9.2 H3 Z" fill="#000" stroke="#000" stroke-width="2.4"/><path d="M4.2 7.8 V5 Q4.2 2.8 6 2.8 Q7.8 2.8 7.8 5 V7.8 L9 9.2 H3 Z" fill="#000" stroke="#fff" stroke-width="1.1"/></svg></div><div style="position:absolute;left:1654px;top:876px;width:19px;height:19px;background:linear-gradient(#c83434,#a02020);border:1px solid #151515;border-radius:3px;box-shadow:inset 0 1px 0 rgba(255,255,255,0.18)"><svg style="position:absolute;left:2px;top:3px;" width="14" height="12" viewBox="0 0 14 12"><path d="M4 4.3 L10 8.7 M10 4.3 L4 8.7" stroke="#000" stroke-width="4.6" stroke-linecap="square"/><path d="M4 4.3 L10 8.7 M10 4.3 L4 8.7" stroke="#fff" stroke-width="2.6" stroke-linecap="square"/></svg></div><svg style="left:0;top:0" width="1679" height="1019" viewBox="0 0 1679 1019"><defs><linearGradient id="lg1" x1="0" y1="0" x2="0" y2="1"><stop offset="0" stop-color="#fff"/><stop offset="1" stop-color="#d4d4d4"/></linearGradient><linearGradient id="lg2" x1="0" y1="0" x2="0" y2="1"><stop offset="0" stop-color="#f8e060"/><stop offset="1" stop-color="#d8a820"/></linearGradient></defs><path d="M1489.5 906.5 H1498 V921.5 H1486 V910 Z" fill="url(#lg1)" stroke="#444" stroke-width="1"/><path d="M1486 910 H1489.5 V906.5" fill="#ddd" stroke="#777" stroke-width="0.7"/><circle cx="1487.3" cy="917.5" r="4.3" fill="#28a048" stroke="#147a34" stroke-width="0.9"/><path d="M1487.3 915 V920 M1484.8 917.5 H1489.8" stroke="#fff" stroke-width="1.5"/><path d="M1512.5 909 Q1512.5 907 1514.5 907 H1517.5 Q1520 907 1521 909 H1526 Q1528 909 1528 911 V920 Q1528 921.5 1526.5 921.5 H1514 Q1512.5 921.5 1512.5 920 Z" fill="url(#lg2)" stroke="#a88010" stroke-width="1"/><path d="M1518 909 Q1520 907 1525 906.8 Q1527 907 1527 909" fill="#f0c838" stroke="#a88010" stroke-width="0.8"/><path d="M1544.5 906.5 H1552.5 V916 H1542.5 V908.5 Z" fill="#f4f4f4" stroke="#444" stroke-width="1"/><path d="M1541.5 910.5 H1543 V921.5 H1541.5 Z" fill="#c09010"/><path d="M1541.8 921.5 L1544 912.5 L1549 911 L1556.5 911 L1554 921.5 Z" fill="url(#lg2)" stroke="#a88010" stroke-width="1"/><path d="M1575 906.5 H1584 V921.5 H1572.5 V909 Z" fill="#b4bec8" stroke="#6a7a8a" stroke-width="1"/><path d="M1572.5 909 H1575 V906.5" fill="#d0d8e0" stroke="#7a8a9a" stroke-width="0.7"/><circle cx="1578.3" cy="916.5" r="4.2" fill="#7a90a8"/><path d="M1575.5 916.5 L1577.8 919 L1582 913.5" fill="none" stroke="#e8eef4" stroke-width="1.5"/><path d="M1603 909.5 L1611 917.5 M1611 909.5 L1603 917.5" stroke="#5a6a7a" stroke-width="3.4" stroke-linecap="square"/></svg><div style="position:absolute;left:1467px;top:930px;width:206px;height:51px;background:#fff"></div>
</body></html>
